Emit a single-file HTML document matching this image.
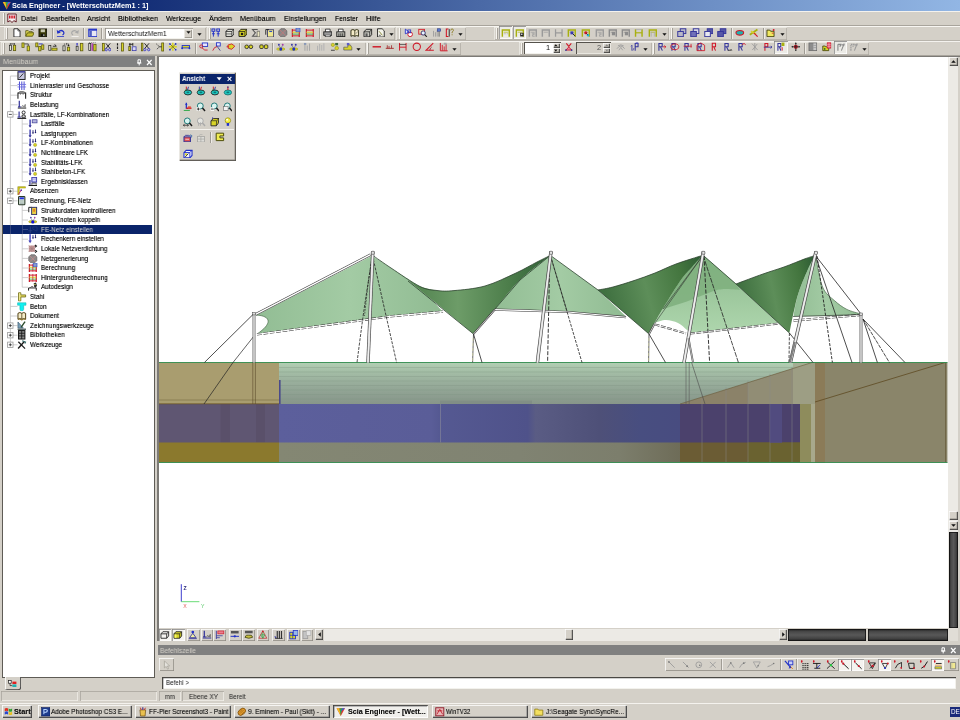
<!DOCTYPE html>
<html lang="de">
<head>
<meta charset="utf-8">
<title>Scia Engineer - [WetterschutzMem1 : 1]</title>
<style>
html,body{margin:0;padding:0;}
body{width:960px;height:720px;overflow:hidden;background:#d4d0c8;position:relative;font-family:"Liberation Sans",sans-serif;font-size:7px;color:#111;}
.abs{position:absolute;}
.t{position:absolute;white-space:nowrap;line-height:1;will-change:transform;}
#titlebar{left:0;top:0;width:960px;height:10.5px;background:linear-gradient(90deg,#0a246a 0%,#132d76 14%,#2a4788 30%,#4a69a6 50%,#6d8fc5 74%,#92b6e4 100%);}
#titlebar .t{color:#fff;font-weight:bold;font-size:7.3px;left:12.4px;top:1.6px;}
.menu .t{font-size:7.2px;top:14.8px;color:#000;text-shadow:0 0 0.5px rgba(0,0,0,0.5);}
.grip{position:absolute;width:1.1px;background:#f8f6f2;box-shadow:0.9px 0 0 #a09c94;}
.sep{position:absolute;width:0.8px;background:#a09c94;box-shadow:0.8px 0 0 #f4f2ee;}
.hdr{position:absolute;background:#808080;color:#d4d0c8;font-size:7.2px;}
.tree .t{font-size:6.9px;color:#000;text-shadow:0 0 0.5px rgba(0,0,0,0.5);}
.sunk{position:absolute;background:#fff;box-shadow:inset 1px 1px 0 #55524c,inset -0.8px -0.8px 0 #f0eee8;}
.btn{position:absolute;background:#d4d0c8;box-shadow:inset 0.7px 0.7px 0 #fff,inset -0.7px -0.7px 0 #404040,inset -1.4px -1.4px 0 #8c8880;}
.task .t{font-size:6.9px;color:#000;text-shadow:0 0 0.5px rgba(0,0,0,0.45);}
</style>
</head>
<body>

<div id="titlebar" class="abs"><svg class="abs" style="left:1.6px;top:0.8px" width="9.6" height="9" viewBox="0 0 10 10"><path d="M0.6 1.2H9.4L5 9.4Z" fill="#e83030"/><path d="M0.6 1.2L3.6 1.2L5 9.4Z" fill="#f0c020"/><path d="M3.6 1.2H6.4L5 9.4Z" fill="#30a848"/><path d="M6.4 1.2H9.4L5 5Z" fill="#4070e0"/></svg><span class="t">Scia Engineer - [WetterschutzMem1 : 1]</span></div>
<div class="menu"><span class="t" style="left:21.0px;top:14.9px;font-size:7.4px;transform:scaleX(0.955);transform-origin:0 0">Datei</span><span class="t" style="left:45.5px;top:14.9px;font-size:7.4px;transform:scaleX(0.936);transform-origin:0 0">Bearbeiten</span><span class="t" style="left:87.0px;top:14.9px;font-size:7.4px;transform:scaleX(0.948);transform-origin:0 0">Ansicht</span><span class="t" style="left:118.0px;top:14.9px;font-size:7.4px;transform:scaleX(0.992);transform-origin:0 0">Bibliotheken</span><span class="t" style="left:166.0px;top:14.9px;font-size:7.4px;transform:scaleX(0.938);transform-origin:0 0">Werkzeuge</span><span class="t" style="left:209.0px;top:14.9px;font-size:7.4px;transform:scaleX(0.964);transform-origin:0 0">Ändern</span><span class="t" style="left:240.0px;top:14.9px;font-size:7.4px;transform:scaleX(0.959);transform-origin:0 0">Menübaum</span><span class="t" style="left:284.0px;top:14.9px;font-size:7.4px;transform:scaleX(0.956);transform-origin:0 0">Einstellungen</span><span class="t" style="left:334.5px;top:14.9px;font-size:7.4px;transform:scaleX(0.917);transform-origin:0 0">Fenster</span><span class="t" style="left:365.5px;top:14.9px;font-size:7.4px;transform:scaleX(0.979);transform-origin:0 0">Hilfe</span></div>
<div class="abs" style="left:0;top:10.5px;width:960px;height:0.8px;background:#f4f2ee"></div>
<div class="abs" style="left:0;top:25px;width:960px;height:0.7px;background:#a8a49c"></div><div class="abs" style="left:0;top:25.7px;width:960px;height:0.7px;background:#f8f6f2"></div>
<div class="abs" style="left:0;top:40.3px;width:960px;height:0.7px;background:#b8b4ac"></div><div class="abs" style="left:0;top:41px;width:960px;height:0.7px;background:#f4f2ee"></div>
<div class="abs" style="left:0;top:55.2px;width:960px;height:0.8px;background:#a8a49c"></div>
<div class="grip" style="left:2.5px;top:12.5px;height:11px"></div>
<svg class="abs" style="left:6.5px;top:13px" width="10" height="10.5" viewBox="0 0 10 10.5"><path d="M0.8 1H9.2V9L6.8 7.6L5 9.6L3.2 7.6L0.8 9Z" fill="#f4f0f0" stroke="#5a1018" stroke-width="0.9"/><path d="M2.6 2.4V5.4M4.2 2.4V5.4M5.8 2.4V5.4M7.4 2.4V5.4" stroke="#d01020" stroke-width="1.1"/></svg>
<div class="abs" style="left:4px;top:26.6px;width:202px;height:13.4px;box-shadow:inset 0.7px 0.7px 0 #f0eee8,inset -0.7px -0.7px 0 #aeaaa2"></div>
<div class="grip" style="left:6px;top:28px;height:11px"></div>
<svg class="abs" style="left:11.5px;top:27.8px" width="9.6" height="9.6" viewBox="0 0 10 10"><path d="M2 0.8H6.2L8.4 3V9.4H2Z" fill="#fff" stroke="#1a1a1a" stroke-width="0.9"/><path d="M6.2 0.8V3H8.4" fill="none" stroke="#1a1a1a" stroke-width="0.7"/></svg>
<svg class="abs" style="left:24.8px;top:27.8px" width="9.6" height="9.6" viewBox="0 0 10 10"><path d="M0.8 8.6V2.8H3.4L4.2 3.8H7.6V5" fill="#e8e060" stroke="#4a4a08" stroke-width="0.8"/><path d="M0.8 8.6L2.6 5H9.6L7.8 8.6Z" fill="#c8c030" stroke="#4a4a08" stroke-width="0.8"/><path d="M6 1.8Q7.6 0.6 8.8 2.2" fill="none" stroke="#1a1a1a" stroke-width="0.7"/></svg>
<svg class="abs" style="left:37.8px;top:27.8px" width="9.6" height="9.6" viewBox="0 0 10 10"><rect x="1" y="1" width="8" height="8" fill="#3a3a08" stroke="#15150a" stroke-width="0.9"/><rect x="2.8" y="1.4" width="4.4" height="3" fill="#c8c8b0"/><rect x="3" y="6" width="4" height="3" fill="#15150a"/><rect x="5.6" y="6.6" width="1" height="1.8" fill="#ddd"/></svg>
<div class="sep" style="left:51.5px;top:28px;height:11px"></div>
<svg class="abs" style="left:56.2px;top:27.8px" width="9.6" height="9.6" viewBox="0 0 10 10"><path d="M2.4 4.2Q5 1.4 7.6 3.6Q9.2 5.6 6.8 7.4" fill="none" stroke="#2030c8" stroke-width="1.3"/><path d="M0.8 2L1.4 6L5 4.8Z" fill="#2030c8"/><path d="M1 9H8.4" stroke="#2030c8" stroke-width="0.9"/></svg>
<svg class="abs" style="left:69.8px;top:27.8px" width="9.6" height="9.6" viewBox="0 0 10 10"><path d="M7.6 4.2Q5 1.4 2.4 3.6Q0.8 5.6 3.2 7.4" fill="none" stroke="#a8a8a8" stroke-width="1.2"/><path d="M9.2 2L8.6 6L5 4.8Z" fill="#a8a8a8"/><path d="M1.6 9H9" stroke="#fff" stroke-width="0.8"/></svg>
<div class="sep" style="left:82.6px;top:28px;height:11px"></div>
<svg class="abs" style="left:87.7px;top:27.8px" width="9.6" height="9.6" viewBox="0 0 10 10"><rect x="0.8" y="1.2" width="8.6" height="7.8" fill="#e8e8f4" stroke="#2030c8" stroke-width="1"/><rect x="0.8" y="1.2" width="8.6" height="1.6" fill="#2030c8"/><rect x="1.4" y="3" width="2.6" height="5.6" fill="#5060c0"/></svg>
<div class="sep" style="left:101.2px;top:28px;height:11px"></div>
<div class="abs" style="left:104.5px;top:27.6px;width:88.5px;height:11.4px;background:#fff;box-shadow:inset 0.8px 0.8px 0 #8c8880,inset -0.8px -0.8px 0 #f0eee8"><span class="t" style="left:3.0px;top:2.2px;font-size:7.4px;color:#111;transform:scaleX(0.924);transform-origin:0 0">WetterschutzMem1</span></div>
<div class="abs" style="left:183.8px;top:28.5px;width:8.4px;height:9.7px;background:#d4d0c8;box-shadow:inset 0.7px 0.7px 0 #f4f2ee,inset -0.7px -0.7px 0 #8c8880"></div>
<svg class="abs" style="left:185.5px;top:31.2px" width="5" height="3" viewBox="0 0 5 3"><path d="M0.4 0.2H4.6L2.5 2.8Z" fill="#111"/></svg>
<svg class="abs" style="left:196.5px;top:33.4px" width="5" height="3" viewBox="0 0 5 3"><path d="M0.4 0.2H4.6L2.5 2.8Z" fill="#111"/></svg>
<div class="abs" style="left:206.5px;top:26.6px;width:188px;height:13.4px;box-shadow:inset 0.7px 0.7px 0 #f0eee8,inset -0.7px -0.7px 0 #aeaaa2"></div>
<div class="grip" style="left:208.5px;top:28px;height:11px"></div>
<svg class="abs" style="left:210.7px;top:27.8px" width="9.6" height="9.6" viewBox="0 0 10 10"><g fill="none" stroke="#2030c8" stroke-width="1"><rect x="1" y="1" width="3" height="2.4"/><rect x="6" y="1" width="3" height="2.4"/><path d="M2.5 3.4V9M7.5 3.4V9M1 6H4M6 6H9"/></g></svg>
<svg class="abs" style="left:224.7px;top:27.8px" width="9.6" height="9.6" viewBox="0 0 10 10"><path d="M1 3.6L3 1.4H9.2V6.4L7.2 8.8H1Z" fill="#e4e4dc" stroke="#1a1a1a" stroke-width="0.9"/><path d="M1 3.6H7.2V8.8M7.2 3.6L9.2 1.4" fill="none" stroke="#1a1a1a" stroke-width="0.8"/><path d="M1 6.2H7.2" stroke="#1a1a1a" stroke-width="0.6"/></svg>
<svg class="abs" style="left:237.7px;top:27.8px" width="9.6" height="9.6" viewBox="0 0 10 10"><path d="M1 3.6L3 1.4H9.2V6.4L7.2 8.8H1Z" fill="#d8d428" stroke="#1a1a1a" stroke-width="0.9"/><path d="M1 3.6H7.2V8.8M7.2 3.6L9.2 1.4" fill="none" stroke="#1a1a1a" stroke-width="0.8"/><rect x="3" y="5" width="2.4" height="2.4" fill="#1a1a1a"/></svg>
<svg class="abs" style="left:250.7px;top:27.8px" width="9.6" height="9.6" viewBox="0 0 10 10"><path d="M7 1.6H1.6L4.6 5L1.6 8.6H7" fill="none" stroke="#555" stroke-width="1.1"/><path d="M6.4 3.4H9.2V9.2H6.4Z" fill="#e8e4c0" stroke="#555" stroke-width="0.7"/></svg>
<svg class="abs" style="left:264.7px;top:27.8px" width="9.6" height="9.6" viewBox="0 0 10 10"><rect x="2.6" y="1.8" width="6.4" height="7.6" fill="#f0e890" stroke="#3a3a6a" stroke-width="0.9"/><path d="M0.8 7V1.6H4" fill="none" stroke="#1a1a1a" stroke-width="0.9"/><rect x="4.4" y="3" width="3" height="1.2" fill="#3050c0"/></svg>
<svg class="abs" style="left:278.0px;top:27.8px" width="9.6" height="9.6" viewBox="0 0 10 10"><path d="M3 0.8H7L9.2 3V7L7 9.2H3L0.8 7V3Z" fill="#8c8686" stroke="#5a5858" stroke-width="0.7"/><path d="M2 2L8 8M8 2L2 8" stroke="#c07a7a" stroke-width="0.9"/></svg>
<svg class="abs" style="left:291.2px;top:27.8px" width="9.6" height="9.6" viewBox="0 0 10 10"><path d="M1.4 1V9.4M8.6 1V9.4" stroke="#d01828" stroke-width="1.2"/><path d="M1.4 2.2H8.6" stroke="#d01828" stroke-width="1"/><path d="M1.4 4.4H8.6" stroke="#d8d428" stroke-width="1.1"/><path d="M1.4 6.4H8.6" stroke="#44aa44" stroke-width="0.9"/><path d="M1.4 8.2H8.6" stroke="#d01828" stroke-width="1"/><rect x="5.2" y="0" width="4.2" height="4" fill="#8899cc" stroke="#3355cc" stroke-width="0.7"/></svg>
<svg class="abs" style="left:305.2px;top:27.8px" width="9.6" height="9.6" viewBox="0 0 10 10"><path d="M1.4 1V9.4M8.6 1V9.4" stroke="#d01828" stroke-width="1.2"/><path d="M1.4 2.2H8.6" stroke="#d01828" stroke-width="1"/><path d="M1.4 4.4H8.6" stroke="#d8d428" stroke-width="1.1"/><path d="M1.4 6.4H8.6" stroke="#44aa44" stroke-width="0.9"/><path d="M1.4 8.2H8.6" stroke="#d01828" stroke-width="1"/></svg>
<div class="sep" style="left:318.6px;top:28px;height:11px"></div>
<svg class="abs" style="left:322.7px;top:27.8px" width="9.6" height="9.6" viewBox="0 0 10 10"><path d="M2.6 4V1.2H7.4V4" fill="#fff" stroke="#1a1a1a" stroke-width="0.8"/><rect x="0.8" y="4" width="8.4" height="3.6" fill="#9a9a9a" stroke="#1a1a1a" stroke-width="0.9"/><path d="M2.4 7.6V9.2H7.6V7.6" fill="#e8e8e8" stroke="#1a1a1a" stroke-width="0.8"/></svg>
<svg class="abs" style="left:336.2px;top:27.8px" width="9.6" height="9.6" viewBox="0 0 10 10"><path d="M2.6 4V1.2H7.4V4" fill="#fff" stroke="#1a1a1a" stroke-width="0.8"/><rect x="0.8" y="4" width="8.4" height="5" fill="#b8b8b0" stroke="#1a1a1a" stroke-width="0.9"/><path d="M3 5.6V9M5 5.6V9M7 5.6V9" stroke="#1a1a1a" stroke-width="0.8"/></svg>
<svg class="abs" style="left:349.7px;top:27.8px" width="9.6" height="9.6" viewBox="0 0 10 10"><path d="M1 2.4Q3 0.8 5 2.4Q7 0.8 9 2.4V8.6Q7 7.2 5 8.6Q3 7.2 1 8.6Z" fill="#f4ecc8" stroke="#2a2a10" stroke-width="1"/><path d="M5 2.4V8.6" stroke="#2a2a10" stroke-width="0.8"/><path d="M6 6L8.4 3.4" stroke="#777" stroke-width="0.8"/></svg>
<svg class="abs" style="left:363.2px;top:27.8px" width="9.6" height="9.6" viewBox="0 0 10 10"><path d="M1 4L3.4 1.4H9V7L7 9.2H1Z" fill="#c8c8c0" stroke="#1a1a1a" stroke-width="0.9"/><path d="M1 4H7V9.2M7 4L9 1.4" fill="none" stroke="#1a1a1a" stroke-width="0.8"/><rect x="2.6" y="5.6" width="2.2" height="3.4" fill="#555"/></svg>
<svg class="abs" style="left:376.2px;top:27.8px" width="9.6" height="9.6" viewBox="0 0 10 10"><path d="M1.6 0.8H6.4L8.6 3V9.4H1.6Z" fill="#f4f4ec" stroke="#1a1a1a" stroke-width="0.9"/><path d="M3.2 3.4L6.6 7.6" stroke="#8a8a40" stroke-width="1"/><path d="M3 7.6H5" stroke="#1a1a1a" stroke-width="0.7"/></svg>
<svg class="abs" style="left:388.7px;top:33.4px" width="5" height="3" viewBox="0 0 5 3"><path d="M0.4 0.2H4.6L2.5 2.8Z" fill="#111"/></svg>
<div class="abs" style="left:395.5px;top:26.6px;width:70px;height:13.4px;box-shadow:inset 0.7px 0.7px 0 #f0eee8,inset -0.7px -0.7px 0 #aeaaa2"></div>
<div class="grip" style="left:398.6px;top:28px;height:11px"></div>
<svg class="abs" style="left:404.2px;top:27.8px" width="9.6" height="9.6" viewBox="0 0 10 10"><path d="M1.4 1.2L5.6 4.4L1.4 6Z" fill="#e8e8ff" stroke="#2030c8" stroke-width="0.9"/><circle cx="6.4" cy="6.6" r="2.4" fill="#fff" stroke="#d01828" stroke-width="1"/><rect x="4" y="2" width="3" height="3" fill="none" stroke="#2030c8" stroke-width="0.8"/></svg>
<svg class="abs" style="left:418.2px;top:27.8px" width="9.6" height="9.6" viewBox="0 0 10 10"><rect x="0.8" y="1.4" width="6" height="5" fill="#f0d8b0" stroke="#d01828" stroke-width="0.9"/><circle cx="5.4" cy="5.2" r="2.2" fill="#e8f4ff" stroke="#2a2a6a" stroke-width="0.9"/><path d="M7 6.8L9.2 9.2" stroke="#1a1a1a" stroke-width="1.2"/></svg>
<svg class="abs" style="left:432.4px;top:27.8px" width="9.6" height="9.6" viewBox="0 0 10 10"><path d="M1.6 3V9M3.6 4.4V9M5.4 2.4V9" stroke="#9a9a9a" stroke-width="0.9"/><rect x="5.6" y="0.8" width="3.4" height="2.6" fill="#5878d0" stroke="#2a3a8a" stroke-width="0.6"/><path d="M7.4 3.6V9" stroke="#666" stroke-width="1"/></svg>
<svg class="abs" style="left:445.2px;top:27.8px" width="9.6" height="9.6" viewBox="0 0 10 10"><path d="M3.6 1H1.4V9H3.6" fill="none" stroke="#d01828" stroke-width="1.1"/><path d="M4.4 1.2V9" stroke="#1a1a1a" stroke-width="0.9"/><path d="M6 2.6Q6 1 7.4 1Q8.8 1 8.8 2.4Q8.8 3.4 7.4 4.2V5.4" fill="none" stroke="#8a7a20" stroke-width="0.9"/><circle cx="7.4" cy="7" r="0.6" fill="#8a7a20"/></svg>
<svg class="abs" style="left:457.7px;top:33.4px" width="5" height="3" viewBox="0 0 5 3"><path d="M0.4 0.2H4.6L2.5 2.8Z" fill="#111"/></svg>
<div class="abs" style="left:493.5px;top:26.6px;width:175.5px;height:13.4px;box-shadow:inset 0.7px 0.7px 0 #f0eee8,inset -0.7px -0.7px 0 #aeaaa2"></div>
<div class="grip" style="left:496px;top:28px;height:11px"></div>
<div class="abs" style="left:499.2px;top:26.2px;width:13.2px;height:12.8px;background:#ecebe6;box-shadow:inset 0.7px 0.7px 0 #808080,inset -0.7px -0.7px 0 #fff"></div><svg class="abs" style="left:501.0px;top:27.8px" width="9.6" height="9.6" viewBox="0 0 10 10"><path d="M1.4 9V2H8.6V9" fill="none" stroke="#a8b010" stroke-width="1.5"/><path d="M2.8 4.4H7.2" stroke="#a8b010" stroke-width="0.7"/><path d="M3 6H7" stroke="#888" stroke-width="0.7" stroke-dasharray="0.8 0.8"/></svg>
<div class="abs" style="left:513.1px;top:26.2px;width:13.2px;height:12.8px;background:#ecebe6;box-shadow:inset 0.7px 0.7px 0 #808080,inset -0.7px -0.7px 0 #fff"></div><svg class="abs" style="left:514.9px;top:27.8px" width="9.6" height="9.6" viewBox="0 0 10 10"><path d="M1.4 9V2H8.6V9" fill="none" stroke="#a8b010" stroke-width="1.5"/><path d="M2.8 4.4H7.2" stroke="#a8b010" stroke-width="0.7"/><rect x="5.4" y="5" width="3.6" height="3.8" fill="#222"/><rect x="6.2" y="5.8" width="1.6" height="1.4" fill="#ddd"/></svg>
<svg class="abs" style="left:527.8px;top:27.8px" width="9.6" height="9.6" viewBox="0 0 10 10"><path d="M1.4 9V2H8.6V9" fill="none" stroke="#9a9a9a" stroke-width="1.5"/><path d="M2.8 4.4H7.2" stroke="#9a9a9a" stroke-width="0.7"/><path d="M4 5.4H6.4V7H4.6V8.6H7" fill="none" stroke="#9a9a9a" stroke-width="0.8"/></svg>
<svg class="abs" style="left:540.6px;top:27.8px" width="9.6" height="9.6" viewBox="0 0 10 10"><path d="M1.4 9V2H8.6V9" fill="none" stroke="#9a9a9a" stroke-width="1.5"/><path d="M2.8 4.4H7.2" stroke="#9a9a9a" stroke-width="0.7"/></svg>
<svg class="abs" style="left:554.1px;top:27.8px" width="9.6" height="9.6" viewBox="0 0 10 10"><path d="M1.6 1.4V9M8.4 1.4V9M1.6 5H8.4" fill="none" stroke="#9a9a9a" stroke-width="1.3"/></svg>
<svg class="abs" style="left:567.4px;top:27.8px" width="9.6" height="9.6" viewBox="0 0 10 10"><path d="M1.4 9V2H8.6V9" fill="none" stroke="#a8b010" stroke-width="1.5"/><path d="M2.8 4.4H7.2" stroke="#a8b010" stroke-width="0.7"/><rect x="3.6" y="3.6" width="3" height="3" fill="#3838b8"/><path d="M6 6L8.6 8.6" stroke="#222" stroke-width="1"/></svg>
<svg class="abs" style="left:580.6px;top:27.8px" width="9.6" height="9.6" viewBox="0 0 10 10"><path d="M1.4 9V2H8.6V9" fill="none" stroke="#a8b010" stroke-width="1.5"/><path d="M2.8 4.4H7.2" stroke="#a8b010" stroke-width="0.7"/><circle cx="5" cy="5" r="1.6" fill="#d01828"/><circle cx="7.4" cy="7.6" r="1.3" fill="#20b8e0"/><path d="M5.6 5.6L7 7.2" stroke="#222" stroke-width="0.8"/></svg>
<svg class="abs" style="left:594.5px;top:27.8px" width="9.6" height="9.6" viewBox="0 0 10 10"><path d="M1.4 9V2H8.6V9" fill="none" stroke="#9a9a9a" stroke-width="1.5"/><path d="M2.8 4.4H7.2" stroke="#9a9a9a" stroke-width="0.7"/><path d="M4 5.4H6.4V7H4.6V8.6H7" fill="none" stroke="#9a9a9a" stroke-width="0.8"/></svg>
<svg class="abs" style="left:607.6px;top:27.8px" width="9.6" height="9.6" viewBox="0 0 10 10"><path d="M1.4 9V2H8.6V9" fill="none" stroke="#8c8c8c" stroke-width="1.5"/><path d="M2.8 4.4H7.2" stroke="#8c8c8c" stroke-width="0.7"/><rect x="4" y="4" width="3.4" height="3.6" fill="#8c8c8c"/></svg>
<svg class="abs" style="left:620.8px;top:27.8px" width="9.6" height="9.6" viewBox="0 0 10 10"><path d="M1.4 9V2H8.6V9" fill="none" stroke="#8c8c8c" stroke-width="1.5"/><path d="M2.8 4.4H7.2" stroke="#8c8c8c" stroke-width="0.7"/><rect x="4" y="4" width="3.4" height="3.6" fill="#8c8c8c"/></svg>
<svg class="abs" style="left:634.1px;top:27.8px" width="9.6" height="9.6" viewBox="0 0 10 10"><path d="M1.6 1.4V9M8.4 1.4V9" fill="none" stroke="#a8b010" stroke-width="1.5"/><path d="M1.6 5H8.4" stroke="#a8b010" stroke-width="1.2"/><path d="M1.6 1.6H8.4" stroke="#aaa" stroke-width="0.8"/></svg>
<svg class="abs" style="left:647.6px;top:27.8px" width="9.6" height="9.6" viewBox="0 0 10 10"><path d="M1.4 9V2H8.6V9" fill="none" stroke="#a8b010" stroke-width="1.5"/><path d="M2.8 4.4H7.2" stroke="#a8b010" stroke-width="0.7"/><path d="M3.4 4V9M6.6 4V9" stroke="#aaa" stroke-width="0.8"/></svg>
<svg class="abs" style="left:661.5px;top:33.4px" width="5" height="3" viewBox="0 0 5 3"><path d="M0.4 0.2H4.6L2.5 2.8Z" fill="#111"/></svg>
<div class="abs" style="left:669px;top:26.6px;width:118px;height:13.4px;box-shadow:inset 0.7px 0.7px 0 #f0eee8,inset -0.7px -0.7px 0 #aeaaa2"></div>
<div class="grip" style="left:671px;top:28px;height:11px"></div>
<svg class="abs" style="left:677.0px;top:27.8px" width="9.6" height="9.6" viewBox="0 0 10 10"><rect x="3.4" y="0.8" width="5.8" height="5" fill="#b8b8c8" stroke="#34349a" stroke-width="1"/><rect x="0.8" y="3.6" width="5.8" height="5.4" fill="#b8b8c8" stroke="#34349a" stroke-width="1"/></svg>
<svg class="abs" style="left:690.2px;top:27.8px" width="9.6" height="9.6" viewBox="0 0 10 10"><rect x="3.4" y="0.8" width="5.8" height="5" fill="#d8d8e8" stroke="#34349a" stroke-width="1"/><rect x="0.8" y="3.6" width="5.8" height="5.4" fill="#7070b8" stroke="#34349a" stroke-width="1"/></svg>
<svg class="abs" style="left:703.8px;top:27.8px" width="9.6" height="9.6" viewBox="0 0 10 10"><rect x="3.4" y="0.8" width="5.8" height="5" fill="#5858a8" stroke="#34349a" stroke-width="1"/><rect x="0.8" y="3.6" width="5.8" height="5.4" fill="#e8e8f0" stroke="#34349a" stroke-width="1"/></svg>
<svg class="abs" style="left:717.2px;top:27.8px" width="9.6" height="9.6" viewBox="0 0 10 10"><rect x="3.4" y="0.8" width="5.8" height="5" fill="#5858a8" stroke="#34349a" stroke-width="1"/><rect x="0.8" y="3.6" width="5.8" height="5.4" fill="#5858a8" stroke="#34349a" stroke-width="1"/></svg>
<div class="sep" style="left:730.6px;top:28px;height:11px"></div>
<svg class="abs" style="left:735.0px;top:27.8px" width="9.6" height="9.6" viewBox="0 0 10 10"><ellipse cx="5" cy="5" rx="4" ry="2.4" fill="#20b0b0" stroke="#d01828" stroke-width="1.1"/></svg>
<svg class="abs" style="left:749.2px;top:27.8px" width="9.6" height="9.6" viewBox="0 0 10 10"><path d="M0.8 7L8.8 1.6" stroke="#a8b010" stroke-width="1.8"/><path d="M2 3.4L7.4 6.4" stroke="#d8d428" stroke-width="1.6"/><path d="M5 5L9 9" stroke="#d01828" stroke-width="1.2"/></svg>
<div class="sep" style="left:762.6px;top:28px;height:11px"></div>
<svg class="abs" style="left:766.2px;top:27.8px" width="9.6" height="9.6" viewBox="0 0 10 10"><path d="M1 9V2.2H4L4.8 3.4H8.4V9Z" fill="#f0e860" stroke="#3a3a08" stroke-width="0.9"/><circle cx="8" cy="2" r="1" fill="#d01828"/><path d="M6 5.4H8" stroke="#d01828" stroke-width="0.8"/></svg>
<svg class="abs" style="left:780.2px;top:33.4px" width="5" height="3" viewBox="0 0 5 3"><path d="M0.4 0.2H4.6L2.5 2.8Z" fill="#111"/></svg>
<div class="abs" style="left:0.5px;top:41.6px;width:365px;height:13.4px;box-shadow:inset 0.7px 0.7px 0 #f0eee8,inset -0.7px -0.7px 0 #aeaaa2"></div>
<div class="grip" style="left:2.5px;top:43px;height:11px"></div>
<svg class="abs" style="left:7.7px;top:42.4px" width="9.6" height="9.6" viewBox="0 0 10 10"><rect x="1.4" y="3.4" width="2.2" height="5.6" fill="#e8e8d8" stroke="#1a1a1a" stroke-width="0.7"/><rect x="5.6" y="3.4" width="2.4" height="5.6" fill="#d8d428" stroke="#5e5a10" stroke-width="0.8"/><path d="M2.4 2H7" stroke="#1a1a1a" stroke-width="0.7"/><path d="M2.4 1.2V3M6.8 1.2V3" stroke="#1a1a1a" stroke-width="0.6"/></svg>
<svg class="abs" style="left:21.2px;top:42.4px" width="9.6" height="9.6" viewBox="0 0 10 10"><rect x="1" y="1" width="2.2" height="4.6" fill="#d8d428" stroke="#5e5a10" stroke-width="0.8"/><rect x="6.4" y="4.2" width="2.4" height="5" fill="#d8d428" stroke="#5e5a10" stroke-width="0.8"/><path d="M3.6 2H7.6V4" fill="none" stroke="#1a1a1a" stroke-width="0.7"/></svg>
<svg class="abs" style="left:35.2px;top:42.4px" width="9.6" height="9.6" viewBox="0 0 10 10"><rect x="0.8" y="1" width="2.2" height="4" fill="#d8d428" stroke="#5e5a10" stroke-width="0.8"/><rect x="3.8" y="4.6" width="2.4" height="4.6" fill="#d8d428" stroke="#5e5a10" stroke-width="0.8"/><rect x="7" y="3" width="2.2" height="4.6" fill="#d8d428" stroke="#5e5a10" stroke-width="0.8"/><path d="M4 2H8" stroke="#2030c8" stroke-width="0.9"/></svg>
<svg class="abs" style="left:48.4px;top:42.4px" width="9.6" height="9.6" viewBox="0 0 10 10"><rect x="0.8" y="3.6" width="2.2" height="5" fill="#e8e8d8" stroke="#1a1a1a" stroke-width="0.7"/><rect x="4" y="6.4" width="5.4" height="2.2" fill="#d8d428" stroke="#5e5a10" stroke-width="0.8"/><path d="M5 4.4H8.6L7 2.4" fill="none" stroke="#1a1a1a" stroke-width="0.9"/></svg>
<svg class="abs" style="left:62.2px;top:42.4px" width="9.6" height="9.6" viewBox="0 0 10 10"><rect x="1" y="4" width="2.2" height="5.2" fill="#e8e8d8" stroke="#1a1a1a" stroke-width="0.7"/><rect x="5.6" y="5.4" width="2.4" height="3.8" fill="#d8d428" stroke="#5e5a10" stroke-width="0.8"/><path d="M2 2.2H8M5 1V3.4" stroke="#1a1a1a" stroke-width="0.7" stroke-dasharray="1.2 0.8"/><circle cx="6.8" cy="3.6" r="0.9" fill="#1a1a1a"/></svg>
<svg class="abs" style="left:75.2px;top:42.4px" width="9.6" height="9.6" viewBox="0 0 10 10"><rect x="1.2" y="4.4" width="2" height="4.6" fill="#e8e8d8" stroke="#1a1a1a" stroke-width="0.7"/><rect x="5.8" y="1.4" width="2.4" height="7.8" fill="#d8d428" stroke="#5e5a10" stroke-width="0.8"/><circle cx="2.2" cy="2" r="0.9" fill="#3838c8"/><path d="M2.2 2.8V4.2" stroke="#3838c8" stroke-width="0.7"/></svg>
<svg class="abs" style="left:88.2px;top:42.4px" width="9.6" height="9.6" viewBox="0 0 10 10"><rect x="0.8" y="1.6" width="2" height="7.4" fill="#e8e8d8" stroke="#1a1a1a" stroke-width="0.7"/><rect x="3.6" y="1.4" width="1.8" height="7.8" fill="#b040b0"/><rect x="6" y="2.6" width="2.4" height="6.6" fill="#d8d428" stroke="#5e5a10" stroke-width="0.8"/><path d="M1 0.8H9" stroke="#1a1a1a" stroke-width="0.6" stroke-dasharray="1 1"/></svg>
<svg class="abs" style="left:101.8px;top:42.4px" width="9.6" height="9.6" viewBox="0 0 10 10"><rect x="0.6" y="1.4" width="1.8" height="7.8" fill="#d8d428" stroke="#5e5a10" stroke-width="0.8"/><path d="M4 1.4L8.6 7M8.6 1.4L4 7" stroke="#1a1a1a" stroke-width="0.9"/><circle cx="4.4" cy="8" r="1.2" fill="none" stroke="#3838c8" stroke-width="0.9"/><circle cx="8" cy="8" r="1.2" fill="none" stroke="#3838c8" stroke-width="0.9"/></svg>
<svg class="abs" style="left:114.8px;top:42.4px" width="9.6" height="9.6" viewBox="0 0 10 10"><rect x="6.8" y="1" width="2" height="8.4" fill="#d8d428" stroke="#5e5a10" stroke-width="0.8"/><path d="M2.6 1.2V9" stroke="#1a1a1a" stroke-width="1.2" stroke-dasharray="2.4 1.2"/></svg>
<svg class="abs" style="left:128.2px;top:42.4px" width="9.6" height="9.6" viewBox="0 0 10 10"><path d="M2 1V9M1 2.4H5M5 1V4" stroke="#1a1a1a" stroke-width="0.9"/><rect x="4.4" y="5" width="4" height="4" fill="#d8d8f8" stroke="#3838a8" stroke-width="0.8"/><rect x="0.8" y="4.6" width="1.6" height="4.4" fill="#d8d428" stroke="#5e5a10" stroke-width="0.8"/></svg>
<svg class="abs" style="left:141.2px;top:42.4px" width="9.6" height="9.6" viewBox="0 0 10 10"><rect x="0.4" y="1.2" width="1.6" height="8" fill="#d8d428" stroke="#5e5a10" stroke-width="0.8"/><path d="M3.6 1.4L8.4 7M8.4 1.4L3.6 7" stroke="#1a1a1a" stroke-width="0.9"/><circle cx="4" cy="8" r="1.2" fill="none" stroke="#3838c8" stroke-width="0.9"/><circle cx="8" cy="8" r="1.2" fill="none" stroke="#3838c8" stroke-width="0.9"/></svg>
<svg class="abs" style="left:154.7px;top:42.4px" width="9.6" height="9.6" viewBox="0 0 10 10"><rect x="7" y="1" width="2" height="8.4" fill="#d8d428" stroke="#5e5a10" stroke-width="0.8"/><path d="M1.4 2L4.6 5L1.4 8" fill="none" stroke="#1a1a1a" stroke-width="0.8" stroke-dasharray="1.4 0.8"/><path d="M4.4 5H7" stroke="#1a1a1a" stroke-width="0.8"/></svg>
<svg class="abs" style="left:167.8px;top:42.4px" width="9.6" height="9.6" viewBox="0 0 10 10"><path d="M5 0.8V9.2M0.8 5H9.2" stroke="#d8d428" stroke-width="1.6"/><path d="M2 2L8 8M8 2L2 8" stroke="#8a8610" stroke-width="1"/><g fill="#2030c8"><circle cx="2" cy="2" r="0.9"/><circle cx="8" cy="2" r="0.9"/><circle cx="2" cy="8" r="0.9"/><circle cx="8" cy="8" r="0.9"/></g></svg>
<svg class="abs" style="left:181.2px;top:42.4px" width="9.6" height="9.6" viewBox="0 0 10 10"><rect x="1.2" y="3.6" width="7.6" height="2.6" fill="#d8d428" stroke="#2030c8" stroke-width="0.9"/><circle cx="1.2" cy="6.6" r="1" fill="#2030c8"/><circle cx="8.8" cy="6.6" r="1" fill="#2030c8"/></svg>
<div class="sep" style="left:194.6px;top:43px;height:11px"></div>
<svg class="abs" style="left:199.2px;top:42.4px" width="9.6" height="9.6" viewBox="0 0 10 10"><rect x="3.4" y="1" width="5.6" height="3.6" fill="#e8e8ff" stroke="#2030c8" stroke-width="0.9"/><circle cx="2.4" cy="4.6" r="1.6" fill="none" stroke="#d01828" stroke-width="0.9"/><path d="M3 6L6 8.4H9" fill="none" stroke="#d01828" stroke-width="0.9"/></svg>
<svg class="abs" style="left:212.2px;top:42.4px" width="9.6" height="9.6" viewBox="0 0 10 10"><rect x="4.6" y="0.8" width="4" height="3.4" fill="#e8e8ff" stroke="#2030c8" stroke-width="0.9"/><path d="M0.8 9Q2 5 5.6 4.6" fill="none" stroke="#d01828" stroke-width="0.9"/><path d="M5.4 4.6L8.6 9" stroke="#3a3a8a" stroke-width="0.9"/></svg>
<svg class="abs" style="left:225.7px;top:42.4px" width="9.6" height="9.6" viewBox="0 0 10 10"><path d="M2 3.2L6 2L9.2 4.4L6 7.6L2.4 6.6Z" fill="#d8d428" stroke="#d01828" stroke-width="0.9"/><path d="M0.6 5H3" stroke="#d01828" stroke-width="1"/></svg>
<div class="sep" style="left:239.4px;top:43px;height:11px"></div>
<svg class="abs" style="left:244.2px;top:42.4px" width="9.6" height="9.6" viewBox="0 0 10 10"><circle cx="2.8" cy="5" r="1.9" fill="#d8d428" stroke="#1a1a1a" stroke-width="0.8"/><circle cx="7.2" cy="5" r="1.9" fill="#d8d428" stroke="#1a1a1a" stroke-width="0.8"/></svg>
<svg class="abs" style="left:259.2px;top:42.4px" width="9.6" height="9.6" viewBox="0 0 10 10"><rect x="0.8" y="3" width="3.6" height="3.8" rx="1" fill="#d8d428" stroke="#1a1a1a" stroke-width="0.8"/><rect x="5.6" y="3" width="3.6" height="3.8" rx="1" fill="#d8d428" stroke="#1a1a1a" stroke-width="0.8"/></svg>
<div class="sep" style="left:271.6px;top:43px;height:11px"></div>
<svg class="abs" style="left:276.2px;top:42.4px" width="9.6" height="9.6" viewBox="0 0 10 10"><ellipse cx="5" cy="7.4" rx="4.4" ry="1.4" fill="#d8d428" stroke="#8a8610" stroke-width="0.4"/><circle cx="5" cy="7.4" r="1.6" fill="#2030c8"/><circle cx="3" cy="2.8" r="1" fill="#3838a8"/><circle cx="7" cy="2.8" r="1" fill="#a838a8"/><path d="M3 3.6L4.6 6M7 3.6L5.4 6" stroke="#558" stroke-width="0.6"/></svg>
<svg class="abs" style="left:289.4px;top:42.4px" width="9.6" height="9.6" viewBox="0 0 10 10"><ellipse cx="5" cy="7.4" rx="4.4" ry="1.4" fill="#d8d428" stroke="#8a8610" stroke-width="0.4"/><circle cx="5" cy="7.4" r="1.6" fill="#2030c8"/><circle cx="3" cy="2.8" r="1" fill="#3838a8"/><circle cx="7" cy="2.8" r="1" fill="#3838a8"/><path d="M3 3.6L4.6 6M7 3.6L5.4 6" stroke="#558" stroke-width="0.6"/></svg>
<svg class="abs" style="left:302.7px;top:42.4px" width="9.6" height="9.6" viewBox="0 0 10 10"><path d="M2 2V9M4.4 3.6V9M6.8 1.6V9" stroke="#a8a8a8" stroke-width="1.1"/><rect x="1" y="1" width="2.4" height="2" fill="#8898b8"/></svg>
<svg class="abs" style="left:316.2px;top:42.4px" width="9.6" height="9.6" viewBox="0 0 10 10"><path d="M1.6 4V9M3.8 2V9M6 3V9M8.2 1.4V9" stroke="#b4b4b4" stroke-width="1.1"/></svg>
<svg class="abs" style="left:330.2px;top:42.4px" width="9.6" height="9.6" viewBox="0 0 10 10"><circle cx="3" cy="3" r="1.7" fill="#d8d428" stroke="#8a8610" stroke-width="0.5"/><circle cx="7" cy="6.4" r="1.9" fill="#d8d428" stroke="#8a8610" stroke-width="0.5"/><rect x="5.4" y="1" width="3" height="2.4" fill="#3a6a3a"/><path d="M1 8.6H5" stroke="#1a1a1a" stroke-width="0.8"/></svg>
<svg class="abs" style="left:343.2px;top:42.4px" width="9.6" height="9.6" viewBox="0 0 10 10"><path d="M0.8 8.4V5.4H5V3H7.6L9.2 5.6V8.4Z" fill="#d8d428" stroke="#555" stroke-width="0.7"/><rect x="4" y="1" width="2.6" height="2.4" fill="#5a5ac8"/></svg>
<svg class="abs" style="left:355.9px;top:48.0px" width="5" height="3" viewBox="0 0 5 3"><path d="M0.4 0.2H4.6L2.5 2.8Z" fill="#111"/></svg>
<div class="abs" style="left:365.5px;top:41.6px;width:95px;height:13.4px;box-shadow:inset 0.7px 0.7px 0 #f0eee8,inset -0.7px -0.7px 0 #aeaaa2"></div>
<div class="grip" style="left:367.4px;top:43px;height:11px"></div>
<svg class="abs" style="left:372.2px;top:42.4px" width="9.6" height="9.6" viewBox="0 0 10 10"><path d="M0.6 5H9.4" stroke="#d01828" stroke-width="1.5"/></svg>
<svg class="abs" style="left:385.2px;top:42.4px" width="9.6" height="9.6" viewBox="0 0 10 10"><path d="M0.8 6.6H9.2" stroke="#a02020" stroke-width="0.9"/><path d="M2.4 3.4V6.6M4.2 4.2V6.6M6.8 3.4V6.6" stroke="#a02020" stroke-width="0.8"/></svg>
<svg class="abs" style="left:398.2px;top:42.4px" width="9.6" height="9.6" viewBox="0 0 10 10"><path d="M1.6 1V9M8.4 1V9M1.6 5.4H8.4" fill="none" stroke="#d01828" stroke-width="1"/><path d="M1.6 2.6H8.4" stroke="#1a1a1a" stroke-width="0.6"/></svg>
<svg class="abs" style="left:411.8px;top:42.4px" width="9.6" height="9.6" viewBox="0 0 10 10"><circle cx="5" cy="5" r="3.8" fill="none" stroke="#d01828" stroke-width="1.1"/></svg>
<svg class="abs" style="left:425.2px;top:42.4px" width="9.6" height="9.6" viewBox="0 0 10 10"><path d="M8.6 1.2L1 8.6H9.2" fill="none" stroke="#d01828" stroke-width="1.1"/><path d="M5 8.6Q5.4 6 7 5.2" fill="none" stroke="#8a1020" stroke-width="0.8"/></svg>
<svg class="abs" style="left:438.8px;top:42.4px" width="9.6" height="9.6" viewBox="0 0 10 10"><path d="M1.4 1V9.2H9" fill="none" stroke="#d01828" stroke-width="1"/><path d="M3.4 3V9M5.4 4.6V9M7.4 2V9" stroke="#d01828" stroke-width="0.9"/><rect x="5" y="0.8" width="3" height="2" fill="#aaa"/></svg>
<svg class="abs" style="left:451.5px;top:48.0px" width="5" height="3" viewBox="0 0 5 3"><path d="M0.4 0.2H4.6L2.5 2.8Z" fill="#111"/></svg>
<div class="abs" style="left:518.5px;top:41.6px;width:133px;height:13.4px;box-shadow:inset 0.7px 0.7px 0 #f0eee8,inset -0.7px -0.7px 0 #aeaaa2"></div>
<div class="grip" style="left:520.6px;top:43px;height:11px"></div>
<div class="sunk" style="left:524px;top:41.8px;width:36.6px;height:11.8px;"><span class="t" style="left:22px;top:2.2px;font-size:7.4px;color:#111">1</span></div>
<div class="btn" style="left:552.6px;top:42.8px;width:7px;height:4.9px"></div><div class="btn" style="left:552.6px;top:47.699999999999996px;width:7px;height:4.9px"></div><svg class="abs" style="left:554.2px;top:44.0px" width="3.6" height="7.6" viewBox="0 0 3.6 7.6"><path d="M0 2.2L1.8 0.2L3.6 2.2ZM0 5.4L1.8 7.4L3.6 5.4Z" fill="#111"/></svg>
<svg class="abs" style="left:564.2px;top:42.4px" width="9.6" height="9.6" viewBox="0 0 10 10"><path d="M2.4 1.4L5 4.6L7.6 1.4" fill="none" stroke="#d01828" stroke-width="1.1"/><path d="M2 8.4L5 5.2L8 8.4Z" fill="#e888a0" stroke="#d01828" stroke-width="0.9"/><circle cx="2" cy="8.4" r="0.9" fill="#34349a"/><circle cx="8" cy="8.4" r="0.9" fill="#34349a"/></svg>
<div class="sunk" style="left:576px;top:41.8px;width:35.4px;height:11.8px;background:#d4d0c8"><span class="t" style="left:21px;top:2.2px;font-size:7.4px;color:#555">2</span></div>
<div class="btn" style="left:603.4px;top:42.8px;width:7px;height:4.9px"></div><div class="btn" style="left:603.4px;top:47.699999999999996px;width:7px;height:4.9px"></div><svg class="abs" style="left:605.0px;top:44.0px" width="3.6" height="7.6" viewBox="0 0 3.6 7.6"><path d="M0 2.2L1.8 0.2L3.6 2.2ZM0 5.4L1.8 7.4L3.6 5.4Z" fill="#888"/></svg>
<svg class="abs" style="left:615.9px;top:42.4px" width="9.6" height="9.6" viewBox="0 0 10 10"><path d="M1 7Q5 1.4 9 7M2 4Q5 2 8 4" fill="none" stroke="#9a9a9a" stroke-width="0.9"/><path d="M3 8.6L5 5.6L7 8.6" fill="none" stroke="#9a9a9a" stroke-width="0.8"/></svg>
<svg class="abs" style="left:630.2px;top:42.4px" width="9.6" height="9.6" viewBox="0 0 10 10"><path d="M1 4.4L2 3.4V9" fill="none" stroke="#34349a" stroke-width="0.9"/><path d="M3 9L4 6.4" stroke="#34349a" stroke-width="0.7"/><path d="M5.4 9V1.6H8.4V5H5.4" fill="none" stroke="#34349a" stroke-width="1.1"/><rect x="6" y="0.4" width="2.6" height="1.2" fill="#5a5ac8"/></svg>
<svg class="abs" style="left:642.5px;top:48.0px" width="5" height="3" viewBox="0 0 5 3"><path d="M0.4 0.2H4.6L2.5 2.8Z" fill="#111"/></svg>
<div class="abs" style="left:651.5px;top:41.6px;width:217.5px;height:13.4px;box-shadow:inset 0.7px 0.7px 0 #f0eee8,inset -0.7px -0.7px 0 #aeaaa2"></div>
<div class="grip" style="left:653.4px;top:43px;height:11px"></div>
<svg class="abs" style="left:657.2px;top:42.4px" width="9.6" height="9.6" viewBox="0 0 10 10"><path d="M2 9V1.6H5.4V5H2M5.6 9L3.6 5" fill="none" stroke="#34349a" stroke-width="1.1"/><path d="M6 5H9.2M7.8 3.6L9.2 5L7.8 6.4" fill="none" stroke="#d01828" stroke-width="0.9"/></svg>
<svg class="abs" style="left:670.2px;top:42.4px" width="9.6" height="9.6" viewBox="0 0 10 10"><path d="M2 9V1.6H5.4V5H2M5.6 9L3.6 5" fill="none" stroke="#34349a" stroke-width="1.1"/><ellipse cx="5" cy="5" rx="4.2" ry="3" fill="none" stroke="#d01828" stroke-width="0.9"/></svg>
<svg class="abs" style="left:683.2px;top:42.4px" width="9.6" height="9.6" viewBox="0 0 10 10"><path d="M2 9V1.6H5.4V5H2M5.6 9L3.6 5" fill="none" stroke="#34349a" stroke-width="1.1"/><path d="M0.6 4.4H9.2M8.4 2V6" fill="none" stroke="#d01828" stroke-width="0.8"/></svg>
<svg class="abs" style="left:696.0px;top:42.4px" width="9.6" height="9.6" viewBox="0 0 10 10"><path d="M2 9V1.6H5.4V5H2M5.6 9L3.6 5" fill="none" stroke="#34349a" stroke-width="1.1"/><path d="M1 9V3.4L5 1L9 3.4V9Z" fill="none" stroke="#d01828" stroke-width="0.9"/></svg>
<svg class="abs" style="left:708.6px;top:42.4px" width="9.6" height="9.6" viewBox="0 0 10 10"><path d="M3.4 9V1.4H6.8V5H3.4M6.8 9L5 5" fill="none" stroke="#d01828" stroke-width="1.1"/></svg>
<svg class="abs" style="left:723.2px;top:42.4px" width="9.6" height="9.6" viewBox="0 0 10 10"><path d="M2 9V1.6H5.4V5H2M5.6 9L3.6 5" fill="none" stroke="#34349a" stroke-width="1.1"/><path d="M5 8.6H9M8 7.4L9.2 8.6" stroke="#222" stroke-width="0.8"/></svg>
<svg class="abs" style="left:736.6px;top:42.4px" width="9.6" height="9.6" viewBox="0 0 10 10"><path d="M2 9V1.6H5.4V5H2M5.6 9L3.6 5" fill="none" stroke="#34349a" stroke-width="1.1"/><path d="M5.4 2.6Q7.6 0.4 9 2.8" fill="none" stroke="#d01828" stroke-width="1"/></svg>
<svg class="abs" style="left:749.9px;top:42.4px" width="9.6" height="9.6" viewBox="0 0 10 10"><path d="M2 1.6L8 8.4M7.6 2L2.4 8.4M5 1V9" stroke="#9a9a9a" stroke-width="0.9"/></svg>
<svg class="abs" style="left:762.5px;top:42.4px" width="9.6" height="9.6" viewBox="0 0 10 10"><path d="M2 9V1.6H5V5H2" fill="none" stroke="#d01828" stroke-width="1.1"/><path d="M0.8 5.4H9.4M8 4L9.4 5.4L8 6.8" fill="none" stroke="#34349a" stroke-width="0.9"/></svg>
<div class="abs" style="left:774.4px;top:40.8px;width:13.2px;height:12.8px;background:#ecebe6;box-shadow:inset 0.7px 0.7px 0 #808080,inset -0.7px -0.7px 0 #fff"></div><svg class="abs" style="left:776.2px;top:42.4px" width="9.6" height="9.6" viewBox="0 0 10 10"><path d="M2 9V1.6H5V5H2M5 9L3.6 5" fill="none" stroke="#34349a" stroke-width="1.1"/><rect x="5.8" y="0.6" width="3" height="3.6" fill="#a8b010"/><path d="M6.4 5.4V9" stroke="#d01828" stroke-width="1"/></svg>
<svg class="abs" style="left:790.5px;top:42.4px" width="9.6" height="9.6" viewBox="0 0 10 10"><circle cx="5" cy="5" r="2.2" fill="#d01828"/><path d="M5 0.6V9.4M0.6 5H9.4" stroke="#222" stroke-width="0.8"/><path d="M5 0.6L6 2H4ZM5 9.4L6 8H4ZM0.6 5L2 4V6ZM9.4 5L8 4V6Z" fill="#222"/></svg>
<div class="sep" style="left:804px;top:43px;height:11px"></div>
<svg class="abs" style="left:808.4px;top:42.4px" width="9.6" height="9.6" viewBox="0 0 10 10"><rect x="1" y="1" width="8" height="8" fill="#8c8c8c" stroke="#6a6a6a" stroke-width="0.8"/><rect x="5.6" y="1.4" width="3" height="7" fill="#c8c8c8"/><path d="M5.6 3.6H8.6M5.6 5.8H8.6" stroke="#8c8c8c" stroke-width="0.6"/></svg>
<svg class="abs" style="left:822.2px;top:42.4px" width="9.6" height="9.6" viewBox="0 0 10 10"><path d="M0.8 9V4.2H3.4L4 5H7V9Z" fill="#d8d428" stroke="#3a3a08" stroke-width="0.8"/><rect x="5.4" y="0.8" width="3.8" height="5.6" fill="#e04060" stroke="#d01828" stroke-width="0.6"/><path d="M5.4 2.8H9.2M5.4 4.6H9.2M7.3 0.8V6.4" stroke="#fcc" stroke-width="0.5"/><path d="M2 6L4.4 7.2L2 8.4Z" fill="#2a6a2a"/></svg>
<div class="abs" style="left:833.9px;top:40.8px;width:13.2px;height:12.8px;background:#ecebe6;box-shadow:inset 0.7px 0.7px 0 #808080,inset -0.7px -0.7px 0 #fff"></div><svg class="abs" style="left:835.7px;top:42.4px" width="9.6" height="9.6" viewBox="0 0 10 10"><path d="M2 9V2.4M2 2.4H5L4 5" fill="none" stroke="#8a8a8a" stroke-width="1.2"/><path d="M5.6 9L8.6 1.6M5.6 3H9" fill="none" stroke="#8a8a8a" stroke-width="1.1"/></svg>
<svg class="abs" style="left:849.0px;top:42.4px" width="9.6" height="9.6" viewBox="0 0 10 10"><path d="M2 9V2.4M2 2.4H5L4 5" fill="none" stroke="#9a9a9a" stroke-width="1.2" stroke-dasharray="1.6 0.6"/><path d="M5.6 9L8.6 1.6M5.6 3H9" fill="none" stroke="#9a9a9a" stroke-width="1.1"/></svg>
<svg class="abs" style="left:861.5px;top:48.0px" width="5" height="3" viewBox="0 0 5 3"><path d="M0.4 0.2H4.6L2.5 2.8Z" fill="#111"/></svg>
<div class="hdr" style="left:0;top:56.3px;width:155px;height:10.6px;"><span class="t" style="left:2.6px;top:1.9px;font-size:7.4px;transform:scaleX(0.956);transform-origin:0 0">Menübaum</span></div>
<svg class="abs" style="left:136px;top:58.6px" width="17" height="7" viewBox="0 0 17 7"><path d="M2 0.8H4.4V4H2ZM1 4H5.4M3.2 4V6.4" fill="none" stroke="#fff" stroke-width="1"/><path d="M11 0.8L15.6 6M15.6 0.8L11 6" stroke="#fff" stroke-width="1.2"/></svg>
<div class="abs" id="treebox" style="left:2.2px;top:69.6px;width:152.4px;height:608.6px;background:#fff;box-shadow:inset 1px 1px 0 #5e5b55,inset -1px -1px 0 #5e5b55"></div>
<div class="tree">
<svg class="abs" style="left:0;top:0" width="160" height="360" viewBox="0 0 160 360"><g fill="none" stroke="#c2c2c2" stroke-width="0.8"><path d="M10.4 76.0V344.8" /><path d="M10.4 76.0H17.5"/><path d="M10.4 85.6H17.5"/><path d="M10.4 95.2H17.5"/><path d="M10.4 104.8H17.5"/><path d="M10.4 114.4H17.5"/><path d="M22.2 124.0H28"/><path d="M22.2 133.6H28"/><path d="M22.2 143.2H28"/><path d="M22.2 152.8H28"/><path d="M22.2 162.4H28"/><path d="M22.2 172.0H28"/><path d="M22.2 181.6H28"/><path d="M10.4 191.2H17.5"/><path d="M10.4 200.8H17.5"/><path d="M22.2 210.4H28"/><path d="M22.2 220.0H28"/><path d="M22.2 229.6H28"/><path d="M22.2 239.2H28"/><path d="M22.2 248.8H28"/><path d="M22.2 258.4H28"/><path d="M22.2 268.0H28"/><path d="M22.2 277.6H28"/><path d="M22.2 287.2H28"/><path d="M10.4 296.8H17.5"/><path d="M10.4 306.4H17.5"/><path d="M10.4 316.0H17.5"/><path d="M10.4 325.6H17.5"/><path d="M10.4 335.2H17.5"/><path d="M10.4 344.8H17.5"/><path d="M22.2 118.4V181.6"/><path d="M22.2 204.8V287.2"/></g>
<rect x="7.6" y="111.7" width="5.4" height="5.4" fill="#fff" stroke="#9a9a9a" stroke-width="0.8"/>
<path d="M8.8 114.4H11.8" stroke="#222" stroke-width="0.8"/>
<rect x="7.6" y="188.5" width="5.4" height="5.4" fill="#fff" stroke="#9a9a9a" stroke-width="0.8"/>
<path d="M8.8 191.2H11.8" stroke="#222" stroke-width="0.8"/>
<path d="M10.3 189.7V192.7" stroke="#222" stroke-width="0.8"/>
<rect x="7.6" y="198.1" width="5.4" height="5.4" fill="#fff" stroke="#9a9a9a" stroke-width="0.8"/>
<path d="M8.8 200.8H11.8" stroke="#222" stroke-width="0.8"/>
<rect x="7.6" y="322.9" width="5.4" height="5.4" fill="#fff" stroke="#9a9a9a" stroke-width="0.8"/>
<path d="M8.8 325.6H11.8" stroke="#222" stroke-width="0.8"/>
<path d="M10.3 324.1V327.1" stroke="#222" stroke-width="0.8"/>
<rect x="7.6" y="332.5" width="5.4" height="5.4" fill="#fff" stroke="#9a9a9a" stroke-width="0.8"/>
<path d="M8.8 335.2H11.8" stroke="#222" stroke-width="0.8"/>
<path d="M10.3 333.7V336.7" stroke="#222" stroke-width="0.8"/>
<rect x="7.6" y="342.1" width="5.4" height="5.4" fill="#fff" stroke="#9a9a9a" stroke-width="0.8"/>
<path d="M8.8 344.8H11.8" stroke="#222" stroke-width="0.8"/>
<path d="M10.3 343.3V346.3" stroke="#222" stroke-width="0.8"/>
</svg>
<div class="abs" style="left:3.2px;top:225.0px;width:148.8px;height:9.2px;background:#0a246a"></div>
<div class="abs" style="left:22.2px;top:229.3px;width:6px;height:0.7px;background:#3a4c86"></div><div class="abs" style="left:10.1px;top:225.0px;width:0.7px;height:9.2px;background:#34467f"></div><div class="abs" style="left:21.9px;top:225.0px;width:0.7px;height:9.2px;background:#34467f"></div>
<svg class="abs" style="left:17.2px;top:71.2px" width="9.6" height="9.6" viewBox="0 0 10 10"><rect x="1" y="0.8" width="7.4" height="8" fill="#c8c8e0" stroke="#1a1a1a" stroke-width="1"/><path d="M2.6 7 L6.6 2.6" stroke="#333" stroke-width="1"/><rect x="1" y="0.3" width="7.4" height="1.2" fill="#4444bb"/></svg>
<span class="t" style="left:29.6px;top:72.2px;font-size:7.2px;transform:scaleX(0.884);transform-origin:0 0">Projekt</span>
<svg class="abs" style="left:17.2px;top:80.8px" width="9.6" height="9.6" viewBox="0 0 10 10"><path d="M2.6 0.5V9.5M5 0.5V9.5M7.4 0.5V9.5" stroke="#3333cc" stroke-width="0.9"/><path d="M0.5 3.6H9.5M0.5 6.2H9.5" stroke="#6666dd" stroke-width="0.8"/></svg>
<span class="t" style="left:29.6px;top:81.8px;font-size:7.2px;transform:scaleX(0.884);transform-origin:0 0">Linienraster und Geschosse</span>
<svg class="abs" style="left:17.2px;top:90.4px" width="9.6" height="9.6" viewBox="0 0 10 10"><path d="M1 9V3.2H9V9" fill="none" stroke="#1a1a1a" stroke-width="1.1"/><path d="M1 3.2L3 1.6H7L9 3.2" fill="none" stroke="#555" stroke-width="0.8"/><path d="M3.6 3.2V5M6.4 3.2V5" stroke="#555" stroke-width="0.7"/></svg>
<span class="t" style="left:29.6px;top:91.4px;font-size:7.2px;transform:scaleX(0.884);transform-origin:0 0">Struktur</span>
<svg class="abs" style="left:17.2px;top:100.0px" width="9.6" height="9.6" viewBox="0 0 10 10"><path d="M2.4 0.8V7.2" stroke="#3a3a9a" stroke-width="1.3"/><path d="M0.8 8.4H9.6" stroke="#1a1a1a" stroke-width="1"/><path d="M1 7.2H4" stroke="#3a3a9a" stroke-width="1.2"/><path d="M4.6 7.6L6 5.6L7.4 7.4L8.6 4.6V7.8" fill="none" stroke="#666" stroke-width="0.8"/></svg>
<span class="t" style="left:29.6px;top:101.0px;font-size:7.2px;transform:scaleX(0.884);transform-origin:0 0">Belastung</span>
<svg class="abs" style="left:17.2px;top:109.6px" width="9.6" height="9.6" viewBox="0 0 10 10"><path d="M2.2 1.5V7.4" stroke="#3a3a9a" stroke-width="1.3"/><path d="M0.6 7.4H4" stroke="#3a3a9a" stroke-width="1.2"/><path d="M0.4 8.8H9.6" stroke="#1a1a1a" stroke-width="1"/><circle cx="6.9" cy="2.6" r="1.6" fill="none" stroke="#1a1a1a" stroke-width="0.9"/><path d="M5 7.6L5.6 5.2H8.2L8.8 7.6Z" fill="none" stroke="#1a1a1a" stroke-width="0.9"/></svg>
<span class="t" style="left:29.6px;top:110.6px;font-size:7.2px;transform:scaleX(0.884);transform-origin:0 0">Lastfälle, LF-Kombinationen</span>
<svg class="abs" style="left:28.4px;top:119.2px" width="9.6" height="9.6" viewBox="0 0 10 10"><path d="M2.2 0.6V8" stroke="#5a5ab8" stroke-width="1.7"/><path d="M0.6 6.6L2.2 9.2L3.8 6.6Z" fill="#3a3a9a"/><rect x="4.4" y="0.8" width="5" height="3.2" fill="#b8b8e0" stroke="#44449a" stroke-width="0.8"/></svg>
<span class="t" style="left:40.8px;top:120.2px;font-size:7.2px;transform:scaleX(0.884);transform-origin:0 0">Lastfälle</span>
<svg class="abs" style="left:28.4px;top:128.8px" width="9.6" height="9.6" viewBox="0 0 10 10"><path d="M2.2 0.6V8" stroke="#5a5ab8" stroke-width="1.7"/><path d="M0.6 6.6L2.2 9.2L3.8 6.6Z" fill="#3a3a9a"/><path d="M5.2 1.2V4.4M7.8 0.6V3.8" stroke="#1a1a6a" stroke-width="0.9"/><path d="M4.2 3.6L5.2 5.4L6.2 3.6ZM6.8 3L7.8 4.8L8.8 3Z" fill="#1a1a6a"/></svg>
<span class="t" style="left:40.8px;top:129.8px;font-size:7.2px;transform:scaleX(0.884);transform-origin:0 0">Lastgruppen</span>
<svg class="abs" style="left:28.4px;top:138.4px" width="9.6" height="9.6" viewBox="0 0 10 10"><path d="M2.2 0.6V8" stroke="#5a5ab8" stroke-width="1.7"/><path d="M0.6 6.6L2.2 9.2L3.8 6.6Z" fill="#3a3a9a"/><path d="M5.2 1.2V4.4M7.8 0.6V3.8" stroke="#1a1a6a" stroke-width="0.9"/><path d="M4.2 3.6L5.2 5.4L6.2 3.6ZM6.8 3L7.8 4.8L8.8 3Z" fill="#1a1a6a"/><circle cx="7.4" cy="7.2" r="1.7" fill="#d8d020" stroke="#8a8a30" stroke-width="0.4"/></svg>
<span class="t" style="left:40.8px;top:139.4px;font-size:7.2px;transform:scaleX(0.884);transform-origin:0 0">LF-Kombinationen</span>
<svg class="abs" style="left:28.4px;top:148.0px" width="9.6" height="9.6" viewBox="0 0 10 10"><path d="M2.2 0.6V8" stroke="#5a5ab8" stroke-width="1.7"/><path d="M0.6 6.6L2.2 9.2L3.8 6.6Z" fill="#3a3a9a"/><path d="M5.2 1.2V4.4M7.8 0.6V3.8" stroke="#1a1a6a" stroke-width="0.9"/><path d="M4.2 3.6L5.2 5.4L6.2 3.6ZM6.8 3L7.8 4.8L8.8 3Z" fill="#1a1a6a"/><circle cx="7.4" cy="7.2" r="1.7" fill="#d8d020" stroke="#8a8a30" stroke-width="0.4"/></svg>
<span class="t" style="left:40.8px;top:149.0px;font-size:7.2px;transform:scaleX(0.884);transform-origin:0 0">Nichtlineare LFK</span>
<svg class="abs" style="left:28.4px;top:157.6px" width="9.6" height="9.6" viewBox="0 0 10 10"><path d="M2.2 0.6V8" stroke="#5a5ab8" stroke-width="1.7"/><path d="M0.6 6.6L2.2 9.2L3.8 6.6Z" fill="#3a3a9a"/><path d="M5.2 1.2V4.4M7.8 0.6V3.8" stroke="#1a1a6a" stroke-width="0.9"/><path d="M4.2 3.6L5.2 5.4L6.2 3.6ZM6.8 3L7.8 4.8L8.8 3Z" fill="#1a1a6a"/><circle cx="7.4" cy="7.2" r="1.7" fill="#d8d020" stroke="#8a8a30" stroke-width="0.4"/></svg>
<span class="t" style="left:40.8px;top:158.6px;font-size:7.2px;transform:scaleX(0.884);transform-origin:0 0">Stabilitäts-LFK</span>
<svg class="abs" style="left:28.4px;top:167.2px" width="9.6" height="9.6" viewBox="0 0 10 10"><path d="M2.2 0.6V8" stroke="#5a5ab8" stroke-width="1.7"/><path d="M0.6 6.6L2.2 9.2L3.8 6.6Z" fill="#3a3a9a"/><path d="M5.2 1.2V4.4M7.8 0.6V3.8" stroke="#1a1a6a" stroke-width="0.9"/><path d="M4.2 3.6L5.2 5.4L6.2 3.6ZM6.8 3L7.8 4.8L8.8 3Z" fill="#1a1a6a"/><circle cx="7.4" cy="7.2" r="1.7" fill="#d8d020" stroke="#8a8a30" stroke-width="0.4"/></svg>
<span class="t" style="left:40.8px;top:168.2px;font-size:7.2px;transform:scaleX(0.884);transform-origin:0 0">Stahlbeton-LFK</span>
<svg class="abs" style="left:28.4px;top:176.8px" width="9.6" height="9.6" viewBox="0 0 10 10"><rect x="4" y="0.4" width="5" height="5" fill="#a8a8e8" stroke="#3838a8" stroke-width="0.9"/><path d="M5 2H8M5 3.6H8" stroke="#eef" stroke-width="0.7"/><path d="M0.6 8.8H9.4" stroke="#1a1a1a" stroke-width="1.2"/><path d="M2 3V8" stroke="#3a3a9a" stroke-width="1.4"/><path d="M4 8V6.4H8.6V8" fill="none" stroke="#333" stroke-width="0.8"/></svg>
<span class="t" style="left:40.8px;top:177.8px;font-size:7.2px;transform:scaleX(0.884);transform-origin:0 0">Ergebnisklassen</span>
<svg class="abs" style="left:17.2px;top:186.4px" width="9.6" height="9.6" viewBox="0 0 10 10"><path d="M1.6 9V1.4H9" fill="none" stroke="#8a8200" stroke-width="2"/><path d="M1.6 9V1.4H9" fill="none" stroke="#d8d020" stroke-width="0.9"/><path d="M1.2 9L4.6 4.2" stroke="#c02060" stroke-width="0.9"/><circle cx="4.4" cy="4.4" r="0.9" fill="#6030a0"/></svg>
<span class="t" style="left:29.6px;top:187.4px;font-size:7.2px;transform:scaleX(0.884);transform-origin:0 0">Absenzen</span>
<svg class="abs" style="left:17.2px;top:196.0px" width="9.6" height="9.6" viewBox="0 0 10 10"><rect x="1.6" y="0.6" width="6.6" height="8.6" rx="0.8" fill="#d8e4d8" stroke="#2a3a2a" stroke-width="1.1"/><rect x="2.6" y="1.4" width="4.6" height="2" fill="#2233dd"/><path d="M3 5H7M3 6.4H7M3 7.8H7" stroke="#9aa" stroke-width="0.7"/></svg>
<span class="t" style="left:29.6px;top:197.0px;font-size:7.2px;transform:scaleX(0.884);transform-origin:0 0">Berechnung, FE-Netz</span>
<svg class="abs" style="left:28.4px;top:205.6px" width="9.6" height="9.6" viewBox="0 0 10 10"><path d="M0.8 6.5V1.4H4" fill="none" stroke="#1a1a1a" stroke-width="1"/><rect x="3.8" y="1.4" width="5.2" height="7.6" fill="#e8d048" stroke="#33336a" stroke-width="1"/><rect x="5.4" y="3" width="2" height="3" fill="#e88020"/></svg>
<span class="t" style="left:40.8px;top:206.6px;font-size:7.2px;transform:scaleX(0.884);transform-origin:0 0">Strukturdaten kontrollieren</span>
<svg class="abs" style="left:28.4px;top:215.2px" width="9.6" height="9.6" viewBox="0 0 10 10"><ellipse cx="5" cy="7" rx="4.4" ry="1.3" fill="#d8d020" stroke="#77701a" stroke-width="0.4"/><circle cx="5" cy="7.2" r="1.7" fill="#1111dd"/><circle cx="3" cy="2.6" r="0.9" fill="#44a"/><circle cx="7" cy="2.6" r="0.9" fill="#a4a"/><path d="M3 3.4L4.6 5.8M7 3.4L5.4 5.8" stroke="#558" stroke-width="0.6"/></svg>
<span class="t" style="left:40.8px;top:216.2px;font-size:7.2px;transform:scaleX(0.884);transform-origin:0 0">Teile/Knoten koppeln</span>
<svg class="abs" style="left:28.4px;top:224.8px" width="9.6" height="9.6" viewBox="0 0 10 10" opacity="0.55"><path d="M2.4 1.6V8.6M0.4 6H4.4" stroke="#4a5a9a" stroke-width="0.8"/><path d="M5 2H9.4V6.4L5 4.4Z" fill="none" stroke="#3a4a8a" stroke-width="0.7"/></svg>
<span class="t" style="left:40.8px;top:225.8px;font-size:7.2px;color:#d8dce8;transform:scaleX(0.884);transform-origin:0 0">FE-Netz einstellen</span>
<svg class="abs" style="left:28.4px;top:234.4px" width="9.6" height="9.6" viewBox="0 0 10 10"><path d="M2.2 0.2V8" stroke="#6a6ad0" stroke-width="1.9"/><path d="M0.4 6.8L2.2 9.6L4 6.8Z" fill="#4a4ab8"/><path d="M5.2 1.2V4.4M7.8 0.6V3.8" stroke="#1a1a6a" stroke-width="0.9"/><path d="M4.2 3.6L5.2 5.4L6.2 3.6ZM6.8 3L7.8 4.8L8.8 3Z" fill="#1a1a6a"/></svg>
<span class="t" style="left:40.8px;top:235.4px;font-size:7.2px;transform:scaleX(0.884);transform-origin:0 0">Rechenkern einstellen</span>
<svg class="abs" style="left:28.4px;top:244.0px" width="9.6" height="9.6" viewBox="0 0 10 10"><rect x="0.8" y="1.6" width="6.4" height="6.6" fill="#c89a9a"/><path d="M0.8 1.6L7.2 8.2M7.2 1.6L0.8 8.2M4 1.6V8.2M0.8 4.9H7.2" stroke="#a07a7a" stroke-width="0.6"/><path d="M7.2 1L8.8 2.2L7.4 3.4M7.4 6.4L9 7.6L7.4 9" fill="none" stroke="#1a1a1a" stroke-width="1.1"/></svg>
<span class="t" style="left:40.8px;top:245.0px;font-size:7.2px;transform:scaleX(0.884);transform-origin:0 0">Lokale Netzverdichtung</span>
<svg class="abs" style="left:28.4px;top:253.6px" width="9.6" height="9.6" viewBox="0 0 10 10"><path d="M3 0.8H7L9.2 3V7L7 9.2H3L0.8 7V3Z" fill="#8c8888" stroke="#5a5858" stroke-width="0.7"/><path d="M2 2L8 8M8 2L2 8" stroke="#c08a8a" stroke-width="0.9"/></svg>
<span class="t" style="left:40.8px;top:254.6px;font-size:7.2px;transform:scaleX(0.884);transform-origin:0 0">Netzgenerierung</span>
<svg class="abs" style="left:28.4px;top:263.2px" width="9.6" height="9.6" viewBox="0 0 10 10"><path d="M1.4 1V9.4M8.6 1V9.4" stroke="#cc1122" stroke-width="1.2"/><path d="M1.4 2.2H8.6" stroke="#cc1122" stroke-width="1"/><path d="M1.4 4.4H8.6" stroke="#d8d020" stroke-width="1.1"/><path d="M1.4 6.4H8.6" stroke="#44aa44" stroke-width="0.9"/><path d="M1.4 8.2H8.6" stroke="#cc1122" stroke-width="1"/><path d="M5 1V9" stroke="#cc1122" stroke-width="0.7"/><rect x="5.4" y="0" width="4" height="4" fill="#8899cc" stroke="#3355cc" stroke-width="0.7"/></svg>
<span class="t" style="left:40.8px;top:264.2px;font-size:7.2px;transform:scaleX(0.884);transform-origin:0 0">Berechnung</span>
<svg class="abs" style="left:28.4px;top:272.8px" width="9.6" height="9.6" viewBox="0 0 10 10"><path d="M1.4 1V9.4M8.6 1V9.4" stroke="#cc1122" stroke-width="1.2"/><path d="M1.4 2.2H8.6" stroke="#cc1122" stroke-width="1"/><path d="M1.4 4.4H8.6" stroke="#d8d020" stroke-width="1.1"/><path d="M1.4 6.4H8.6" stroke="#44aa44" stroke-width="0.9"/><path d="M1.4 8.2H8.6" stroke="#cc1122" stroke-width="1"/><path d="M5 1V9" stroke="#cc1122" stroke-width="0.7"/></svg>
<span class="t" style="left:40.8px;top:273.8px;font-size:7.2px;transform:scaleX(0.884);transform-origin:0 0">Hintergrundberechnung</span>
<svg class="abs" style="left:28.4px;top:282.4px" width="9.6" height="9.6" viewBox="0 0 10 10"><path d="M0.6 9V6.2H8.6V9" fill="none" stroke="#1a1a1a" stroke-width="1"/><path d="M2 6.2L3.4 4.8H5.4" fill="none" stroke="#444" stroke-width="0.8"/><path d="M6 1.4L8.4 0.6L9.2 3.4L8.4 6L6.4 5Z" fill="#2a2a2a"/><circle cx="7.2" cy="2.6" r="0.8" fill="#d0d060"/></svg>
<span class="t" style="left:40.8px;top:283.4px;font-size:7.2px;transform:scaleX(0.884);transform-origin:0 0">Autodesign</span>
<svg class="abs" style="left:17.2px;top:292.0px" width="9.6" height="9.6" viewBox="0 0 10 10"><path d="M1.6 0.8H4V3H9V5.2H4V9.2H1.6Z" fill="#e0d860" stroke="#6a6410" stroke-width="0.8"/><path d="M2.8 1V9" stroke="#fffbc0" stroke-width="0.6"/></svg>
<span class="t" style="left:29.6px;top:293.0px;font-size:7.2px;transform:scaleX(0.884);transform-origin:0 0">Stahl</span>
<svg class="abs" style="left:17.2px;top:301.6px" width="9.6" height="9.6" viewBox="0 0 10 10"><path d="M0.6 0.8H9.4V3.4H7V7.6L6.2 9.2H3.8L3 7.6V3.4H0.6Z" fill="#10f0f0" stroke="#0aa8a8" stroke-width="0.5"/></svg>
<span class="t" style="left:29.6px;top:302.6px;font-size:7.2px;transform:scaleX(0.884);transform-origin:0 0">Beton</span>
<svg class="abs" style="left:17.2px;top:311.2px" width="9.6" height="9.6" viewBox="0 0 10 10"><path d="M1 2.4Q3 0.8 5 2.4Q7 0.8 9 2.4V8.6Q7 7.2 5 8.6Q3 7.2 1 8.6Z" fill="#f4ecc8" stroke="#4a3a10" stroke-width="1"/><path d="M5 2.4V8.6" stroke="#4a3a10" stroke-width="0.8"/><path d="M1 8.6Q3 8 5 9.4Q7 8 9 8.6" fill="none" stroke="#8a7020" stroke-width="1"/></svg>
<span class="t" style="left:29.6px;top:312.2px;font-size:7.2px;transform:scaleX(0.884);transform-origin:0 0">Dokument</span>
<svg class="abs" style="left:17.2px;top:320.8px" width="9.6" height="9.6" viewBox="0 0 10 10"><path d="M1 1L1 7.4L6.6 7.4Z" fill="#7aa0b8" stroke="#3a5a70" stroke-width="0.7"/><path d="M8.4 0.6L4.2 6.6" stroke="#2a4a2a" stroke-width="1.4"/><path d="M0.6 8.6H9.4" stroke="#5a6a6a" stroke-width="1.5"/></svg>
<span class="t" style="left:29.6px;top:321.8px;font-size:7.2px;transform:scaleX(0.884);transform-origin:0 0">Zeichnungswerkzeuge</span>
<svg class="abs" style="left:17.2px;top:330.4px" width="9.6" height="9.6" viewBox="0 0 10 10"><rect x="1.6" y="0.6" width="6.6" height="8.8" fill="#8a8a8a" stroke="#1a1a1a" stroke-width="1.1"/><path d="M1.6 3.4H8.2M1.6 6.2H8.2M4.9 0.6V9.4" stroke="#1a1a1a" stroke-width="0.9"/></svg>
<span class="t" style="left:29.6px;top:331.4px;font-size:7.2px;transform:scaleX(0.884);transform-origin:0 0">Bibliotheken</span>
<svg class="abs" style="left:17.2px;top:340.0px" width="9.6" height="9.6" viewBox="0 0 10 10"><path d="M1.2 8.8L7.6 1.6" stroke="#1a1a1a" stroke-width="1.4"/><path d="M1.4 1.8L8.4 9" stroke="#1a1a1a" stroke-width="1.3"/><path d="M5.4 0.8L8.8 2.2L8.2 3.6" fill="none" stroke="#3a6a6a" stroke-width="1.3"/></svg>
<span class="t" style="left:29.6px;top:341.0px;font-size:7.2px;transform:scaleX(0.884);transform-origin:0 0">Werkzeuge</span>
</div>
<div class="abs" style="left:157.4px;top:56.4px;width:1.6px;height:584.4px;background:#7c7a76"></div>
<div class="abs" style="left:158px;top:56.2px;width:802px;height:1px;background:#7c7a76"></div>
<div class="abs" id="viewport" style="left:159px;top:57px;width:789.4px;height:571.4px;background:#fff;"></div>
<svg class="abs" id="scene" style="left:0;top:0;will-change:transform" width="960" height="720" viewBox="0 0 960 720"><defs>
<linearGradient id="gd1" x1="0" y1="0" x2="1" y2="0"><stop offset="0" stop-color="#4e7f4c"/><stop offset="0.35" stop-color="#6d9c68"/><stop offset="0.7" stop-color="#4d7e4b"/><stop offset="1" stop-color="#2f5f36"/></linearGradient>
<linearGradient id="gd2" x1="0" y1="0.2" x2="1" y2="0"><stop offset="0" stop-color="#3f7040"/><stop offset="0.4" stop-color="#5d8e59"/><stop offset="0.75" stop-color="#44763f"/><stop offset="1" stop-color="#2b5a33"/></linearGradient>
<linearGradient id="gl1" x1="0" y1="0" x2="1" y2="0"><stop offset="0" stop-color="#92bd94"/><stop offset="0.5" stop-color="#a3cba4"/><stop offset="1" stop-color="#90bb92"/></linearGradient>
<linearGradient id="gl2" x1="0" y1="0" x2="0" y2="1"><stop offset="0" stop-color="#8cb98d"/><stop offset="1" stop-color="#aed6ad"/></linearGradient>
<linearGradient id="gstr" x1="0" y1="0" x2="0" y2="1"><stop offset="0" stop-color="#b3d0b4"/><stop offset="0.2" stop-color="#a5bfa7"/><stop offset="0.5" stop-color="#98ad9b"/><stop offset="0.8" stop-color="#8d9e90"/><stop offset="1" stop-color="#88968a"/></linearGradient>
<linearGradient id="gpur" x1="0" y1="0" x2="1" y2="0"><stop offset="0" stop-color="#5c5f9c"/><stop offset="0.38" stop-color="#5a5d98"/><stop offset="0.4" stop-color="#555992"/><stop offset="0.62" stop-color="#4f528a"/><stop offset="0.64" stop-color="#5a5c84"/><stop offset="0.8" stop-color="#4e5078"/><stop offset="0.9" stop-color="#484e80"/><stop offset="1" stop-color="#484c80"/></linearGradient>
<linearGradient id="gbot" x1="0" y1="0" x2="1" y2="0"><stop offset="0" stop-color="#848773"/><stop offset="0.6" stop-color="#808372"/><stop offset="0.85" stop-color="#7c7e6c"/><stop offset="1" stop-color="#6e6c58"/></linearGradient>
</defs>
<g><rect x="159" y="362.5" width="120" height="41.5" fill="#a99d6f"/><rect x="159" y="404" width="120" height="39" fill="#5f5672"/><rect x="220.6" y="404" width="9.4" height="38.5" fill="#5a506a"/><rect x="256" y="404" width="9" height="38.5" fill="#5a506a"/><rect x="159" y="442.5" width="120" height="20" fill="#8b792d"/><path d="M159 400H279" stroke="#7a6c40" stroke-width="0.6"/><path d="M159 403.8H279" stroke="#6a5428" stroke-width="0.8"/><rect x="279" y="362.5" width="536" height="41.5" fill="url(#gstr)"/><path d="M279 367.5H815" stroke="#7f9483" stroke-width="0.5" opacity="0.7"/><path d="M279 372H815" stroke="#7f9483" stroke-width="0.5" opacity="0.7"/><path d="M279 376.5H815" stroke="#7f9483" stroke-width="0.5" opacity="0.7"/><path d="M279 381H815" stroke="#7f9483" stroke-width="0.5" opacity="0.7"/><path d="M279 385.5H815" stroke="#7f9483" stroke-width="0.5" opacity="0.7"/><path d="M279 390H815" stroke="#7f9483" stroke-width="0.5" opacity="0.7"/><path d="M279 394.5H815" stroke="#7f9483" stroke-width="0.5" opacity="0.7"/><path d="M279 399H815" stroke="#7f9483" stroke-width="0.5" opacity="0.7"/><rect x="279" y="404" width="401" height="39" fill="url(#gpur)"/><rect x="440" y="400.5" width="92" height="3.5" fill="#7f8c84" opacity="0.8"/><path d="M440.5 404V442.5" stroke="#8a8a9a" stroke-width="0.6"/><rect x="279" y="442.5" width="401" height="20" fill="url(#gbot)"/><rect x="279" y="380" width="1.6" height="24" fill="#4a4a8a"/><path d="M680 404L812 362.5H815V404Z" fill="#8b8269"/><path d="M748 383L812 362.5H815V404H748Z" fill="#989880" opacity="0.55"/><rect x="680" y="404" width="120" height="39" fill="#4b416c"/><rect x="680" y="442.5" width="120" height="20" fill="#6b5c34"/><rect x="748" y="442.5" width="52" height="20" fill="#6a6230"/><path d="M702 395.1V462" stroke="#8a8a86" stroke-width="0.6" opacity="0.8"/><path d="M726 387.5V462" stroke="#8a8a86" stroke-width="0.6" opacity="0.8"/><path d="M748 380.6V462" stroke="#8a8a86" stroke-width="0.6" opacity="0.8"/><path d="M770 373.7V462" stroke="#8a8a86" stroke-width="0.6" opacity="0.8"/><path d="M792 366.8V462" stroke="#8a8a86" stroke-width="0.6" opacity="0.8"/><rect x="800" y="404" width="11.2" height="58.5" fill="#8e8c5c"/><rect x="811" y="404" width="4.6" height="58.5" fill="#a8a88c"/><rect x="770" y="404" width="12" height="39" fill="#545088" opacity="0.7"/><rect x="793" y="362.5" width="22" height="41.5" fill="#a2a48a" opacity="0.75"/><rect x="815" y="362.5" width="132.5" height="100" fill="#8a856a"/><rect x="815" y="362.5" width="10" height="100" fill="#8b7b58"/><path d="M815 402L945 362.5" stroke="#5e4a22" stroke-width="0.8"/><path d="M680 404L812 362.5" stroke="#6a5a3a" stroke-width="0.6"/><path d="M945.6 362.5V462" stroke="#6e6444" stroke-width="1"/><path d="M159 362.5H947.5M159 462.5H947.5" stroke="#2f8a4c" stroke-width="0.9"/></g>
<g><path d="M256.0 315.6L371.4 256.0C375.5 257.3 383.1 262.8 391.0 268.0C398.9 273.2 415.2 283.4 420.0 286.5L443.0 312.0L390.0 316.5L257.0 334.0C272 324 272 316 256 315Z" fill="url(#gl1)"/><path d="M550.4 255.4C545.3 259.5 529.2 271.1 520.0 280.0C510.8 288.9 499.2 304.2 495.0 309.0L530.0 310.0L567.5 311.5L626.0 316.5L598.0 290.0Z" fill="url(#gl1)"/><path d="M408.0 280.0C410.0 281.1 415.2 284.8 420.0 286.5C424.8 288.2 431.3 289.8 437.0 290.5C442.7 291.2 446.0 291.4 454.0 290.6C462.0 289.9 474.7 288.9 485.0 286.0C495.3 283.1 507.3 277.0 516.0 273.0C524.7 269.0 531.3 264.9 537.0 262.0C542.7 259.1 548.2 256.5 550.4 255.4C545.3 259.5 529.2 271.1 520.0 280.0C510.8 288.9 502.8 300.0 495.0 309.0C487.2 318.0 477.1 329.8 473.5 334.0Z" fill="url(#gd1)"/><path d="M703.0 255.2C701.3 257.1 696.2 262.3 692.6 266.4C689.0 270.5 685.8 273.1 681.1 279.7C676.4 286.3 668.8 298.9 664.4 306.1C660.0 313.3 656.3 320.0 654.7 322.8C656.6 322.3 662.1 320.0 666.0 320.0C669.9 320.0 674.5 321.4 678.0 323.0C681.5 324.6 684.6 328.1 686.7 329.7C688.8 331.3 690.1 332.3 690.8 332.8L735.0 328.0L778.0 323.0L736.0 284.0Z" fill="url(#gl2)"/><path d="M703.0 255.2C701.3 257.1 696.2 262.3 692.6 266.4C689.0 270.5 685.8 273.1 681.1 279.7C676.4 286.3 667.2 301.7 664.4 306.1L661.7 309.6C666.3 308.1 681.3 303.4 689.4 300.5C697.5 297.6 704.9 294.1 710.3 292.2C715.7 290.3 717.0 289.6 722.0 289.2C727.0 288.8 737.0 289.9 740.0 290.0L736.0 284.0Z" fill="#7fb07e" opacity="0.9"/><path d="M598.0 290.0C600.5 289.5 607.0 288.6 613.0 287.0C619.0 285.4 627.0 282.9 634.0 280.6C641.0 278.3 648.0 275.8 655.0 273.0C662.0 270.2 668.0 267.0 676.0 264.0C684.0 261.0 698.5 256.7 703.0 255.2C701.3 257.1 696.2 262.3 692.6 266.4C689.0 270.5 685.8 273.1 681.1 279.7C676.4 286.3 668.8 298.9 664.4 306.1C660.0 313.3 657.3 318.2 654.7 322.8C652.1 327.4 650.0 332.1 649.0 334.0Z" fill="url(#gd2)"/><path d="M815.4 255.4C816.6 260.7 819.4 279.4 822.6 287.0C825.8 294.6 830.7 297.1 834.7 300.8C838.8 304.5 842.5 307.2 846.9 309.4C851.3 311.6 858.6 313.2 861.0 314.0L861.0 315.5L793.5 316.5C794.4 309.5 796.2 299.7 798.8 292.0C801.4 284.3 806.2 273.1 809.0 267.0C811.8 260.9 814.3 257.3 815.4 255.4Z" fill="url(#gl1)"/><path d="M736.0 284.0C740.5 282.3 755.0 276.8 763.0 274.0C771.0 271.2 777.0 269.5 784.0 267.0C791.0 264.5 799.8 260.7 805.0 258.8C810.2 256.9 813.7 256.0 815.4 255.4C814.3 257.3 811.8 260.9 809.0 267.0C806.2 273.1 801.4 284.3 798.8 292.0C796.2 299.7 795.1 306.2 793.5 313.0C791.9 319.8 790.1 329.7 789.4 333.0Z" fill="url(#gd2)"/><path d="M372.4 255.2C375.5 257.3 383.1 262.8 391.0 268.0C398.9 273.2 412.3 282.8 420.0 286.5C427.7 290.2 431.3 289.8 437.0 290.5C442.7 291.2 446.0 291.4 454.0 290.6C462.0 289.9 474.7 288.9 485.0 286.0C495.3 283.1 507.3 277.0 516.0 273.0C524.7 269.0 531.3 264.9 537.0 262.0C542.7 259.1 548.2 256.5 550.4 255.4" fill="none" stroke="#2c422e" stroke-width="0.8"/><path d="M598.0 290.0C600.5 289.5 607.0 288.6 613.0 287.0C619.0 285.4 627.0 282.9 634.0 280.6C641.0 278.3 648.0 275.8 655.0 273.0C662.0 270.2 668.0 267.0 676.0 264.0C684.0 261.0 698.5 256.7 703.0 255.2" fill="none" stroke="#2c422e" stroke-width="0.8"/><path d="M736.0 284.0C740.5 282.3 755.0 276.8 763.0 274.0C771.0 271.2 777.0 269.5 784.0 267.0C791.0 264.5 799.8 260.7 805.0 258.8C810.2 256.9 813.7 256.0 815.4 255.4" fill="none" stroke="#2c422e" stroke-width="0.8"/><path d="M408 281L473.5 334L495 309L520 280L550.4 255.4" fill="none" stroke="#2c422e" stroke-width="0.8"/><path d="M550.4 255.4L598.0 290.0L649.0 334.0" fill="none" stroke="#2c422e" stroke-width="0.8"/><path d="M703.0 255.2L736.0 284.0L789.4 333.0" fill="none" stroke="#2c422e" stroke-width="0.8"/><path d="M256.0 315.0C272 316 272 324 257 334" fill="none" stroke="#3a5a3a" stroke-width="0.6"/><path d="M815.4 255.4C816.6 260.7 819.4 279.4 822.6 287.0C825.8 294.6 830.7 297.1 834.7 300.8C838.8 304.5 842.5 307.2 846.9 309.4C851.3 311.6 858.6 313.2 861.0 314.0" fill="none" stroke="#3a5a3a" stroke-width="0.6"/></g>
<g><path d="M255.6 314.4L370.6 254.7" fill="none" stroke="#3a3a3a" stroke-width="2.6"/><path d="M255.6 314.4L370.6 254.7" fill="none" stroke="#fff" stroke-width="1.5"/><path d="M257.0 334.4L390.0 316.4L443.0 311.6" fill="none" stroke="#3a3a3a" stroke-width="2.2" stroke-dasharray="5 1.4"/><path d="M257.0 334.4L390.0 316.4L443.0 311.6" fill="none" stroke="#fff" stroke-width="1.1"/><path d="M495.0 309.6L530.0 310.6L567.5 312.0L626.0 317.2" fill="none" stroke="#3a3a3a" stroke-width="2.2"/><path d="M495.0 309.6L530.0 310.6L567.5 312.0L626.0 317.2" fill="none" stroke="#fff" stroke-width="1.1"/><path d="M654.7 324.4L686.0 333.4" fill="none" stroke="#3a3a3a" stroke-width="2.0" stroke-dasharray="5 1.4"/><path d="M654.7 324.4L686.0 333.4" fill="none" stroke="#fff" stroke-width="0.9"/><path d="M690.0 333.6L735.0 328.6L778.0 323.6" fill="none" stroke="#3a3a3a" stroke-width="2.0" stroke-dasharray="5 1.4"/><path d="M690.0 333.6L735.0 328.6L778.0 323.6" fill="none" stroke="#fff" stroke-width="0.9"/><path d="M793.5 320.6L861.0 315.0" fill="none" stroke="#3a3a3a" stroke-width="2.2" stroke-dasharray="5 1.4"/><path d="M793.5 320.6L861.0 315.0" fill="none" stroke="#fff" stroke-width="1.1"/><path d="M793.0 316.5L861.0 314.6" fill="none" stroke="#222" stroke-width="0.6"/><path d="M473.5 334.0L495.0 309.4" fill="none" stroke="#3a3a3a" stroke-width="1.8"/><path d="M473.5 334.0L495.0 309.4" fill="none" stroke="#fff" stroke-width="0.7"/><path d="M649.0 334.0L654.7 323.6" fill="none" stroke="#3a3a3a" stroke-width="1.8"/><path d="M649.0 334.0L654.7 323.6" fill="none" stroke="#fff" stroke-width="0.7"/><path d="M254.0 313.5L204.4 362.5" fill="none" stroke="#222" stroke-width="0.8"/><path d="M254.0 336.0L233.0 362.5L204.0 404.0" fill="none" stroke="#222" stroke-width="0.7"/><path d="M473.5 334.0L472.6 362.5" fill="none" stroke="#555" stroke-width="0.9"/><path d="M473.0 338.0L472.6 362.5" fill="none" stroke="#e8e8a0" stroke-width="0.5" stroke-dasharray="3 2"/><path d="M473.5 334.0L482.0 362.5" fill="none" stroke="#222" stroke-width="0.8"/><path d="M649.0 334.0L648.6 362.5" fill="none" stroke="#555" stroke-width="0.9"/><path d="M648.9 338.0L648.6 362.5" fill="none" stroke="#e8e8a0" stroke-width="0.5" stroke-dasharray="3 2"/><path d="M649.0 334.0L665.5 362.5" fill="none" stroke="#222" stroke-width="0.8"/><path d="M789.4 333.0L813.0 362.5" fill="none" stroke="#222" stroke-width="0.8"/><path d="M789.4 333.0L789.0 362.5" fill="none" stroke="#222" stroke-width="0.8" stroke-dasharray="3 1.4"/><path d="M372.4 255.2C371.5 261.0 368.6 279.7 367.0 290.0C365.4 300.3 364.7 304.9 363.0 317.0C361.3 329.1 358.0 354.9 357.0 362.5" fill="none" stroke="#222" stroke-width="0.8" stroke-dasharray="3 1.2"/><path d="M372.4 255.2L396.6 362.5" fill="none" stroke="#222" stroke-width="0.8" stroke-dasharray="3 1.2"/><path d="M372.4 255.2C371.7 260.2 369.3 274.9 368.0 285.0C366.7 295.1 365.1 310.8 364.5 316.0" fill="none" stroke="#222" stroke-width="0.6" stroke-dasharray="2 1"/><path d="M549.8 256.0L547.6 362.5" fill="none" stroke="#222" stroke-width="0.9" stroke-dasharray="4 1.6"/><path d="M550.4 255.4L582.0 362.5" fill="none" stroke="#222" stroke-width="0.8" stroke-dasharray="3 1.2"/><path d="M550.4 255.4L567.0 311.0" fill="none" stroke="#222" stroke-width="0.5"/><path d="M704.0 256.0L709.6 362.5" fill="none" stroke="#222" stroke-width="0.9" stroke-dasharray="4 1.6"/><path d="M703.0 255.2L738.4 362.5" fill="none" stroke="#222" stroke-width="0.8" stroke-dasharray="5 1"/><path d="M703.0 255.2L655.0 323.0" fill="none" stroke="#222" stroke-width="0.5"/><path d="M703.0 255.2L663.0 309.0" fill="none" stroke="#222" stroke-width="0.5"/><path d="M817.0 256.0L832.4 362.5" fill="none" stroke="#222" stroke-width="0.9" stroke-dasharray="3 1.4"/><path d="M815.4 255.4L852.0 362.5" fill="none" stroke="#222" stroke-width="0.8"/><path d="M815.4 255.4L861.0 314.0" fill="none" stroke="#222" stroke-width="0.8"/><path d="M863.0 319.0L877.4 362.5" fill="none" stroke="#222" stroke-width="0.8"/><path d="M863.0 319.0L889.4 362.5" fill="none" stroke="#222" stroke-width="0.8" stroke-dasharray="4 1"/><path d="M863.0 319.0L905.0 362.5" fill="none" stroke="#222" stroke-width="0.8"/><path d="M686.0 362.5L686.0 404.0" fill="none" stroke="#5a5a5a" stroke-width="0.6"/><path d="M689.2 362.5L689.2 404.0" fill="none" stroke="#5a5a5a" stroke-width="0.6"/><path d="M691.6 362.5L705.0 404.0" fill="none" stroke="#4a4a4a" stroke-width="0.6"/><path d="M252.8 362.5L252.8 404.0" fill="none" stroke="#5a4a2a" stroke-width="0.6"/><path d="M255.4 362.5L255.4 404.0" fill="none" stroke="#5a4a2a" stroke-width="0.6"/></g>
<g><path d="M254.0 314.0L254.0 362.5" stroke="#444" stroke-width="2.8"/><path d="M254.0 314.0L254.0 362.5" stroke="#d2d2d2" stroke-width="1.6"/><path d="M254.0 314.0L254.0 362.5" stroke="#f2f2f2" stroke-width="0.5"/><path d="M372.8 251.3L368.0 362.5" stroke="#444" stroke-width="3.4"/><path d="M372.8 251.3L368.0 362.5" stroke="#d2d2d2" stroke-width="2.2"/><path d="M372.8 251.3L368.0 362.5" stroke="#f2f2f2" stroke-width="1.1"/><path d="M551.0 251.3L537.4 362.5" stroke="#444" stroke-width="3.4"/><path d="M551.0 251.3L537.4 362.5" stroke="#d2d2d2" stroke-width="2.2"/><path d="M551.0 251.3L537.4 362.5" stroke="#f2f2f2" stroke-width="1.1"/><path d="M703.4 251.3L684.0 362.5" stroke="#444" stroke-width="3.4"/><path d="M703.4 251.3L684.0 362.5" stroke="#d2d2d2" stroke-width="2.2"/><path d="M703.4 251.3L684.0 362.5" stroke="#f2f2f2" stroke-width="1.1"/><path d="M816.0 251.4L790.4 362.5" stroke="#444" stroke-width="3.4"/><path d="M816.0 251.4L790.4 362.5" stroke="#d2d2d2" stroke-width="2.2"/><path d="M816.0 251.4L790.4 362.5" stroke="#f2f2f2" stroke-width="1.1"/><path d="M861.0 314.0L861.0 362.5" stroke="#444" stroke-width="2.8"/><path d="M861.0 314.0L861.0 362.5" stroke="#d2d2d2" stroke-width="1.6"/><path d="M861.0 314.0L861.0 362.5" stroke="#f2f2f2" stroke-width="0.5"/><path d="M688.5 338.0L693.0 362.5" stroke="#444" stroke-width="1.8"/><path d="M688.5 338.0L693.0 362.5" stroke="#d2d2d2" stroke-width="0.6"/><path d="M688.5 338.0L693.0 362.5" stroke="#f2f2f2" stroke-width="0.3"/><path d="M795.0 342.0L790.0 362.5" stroke="#444" stroke-width="1.4"/><path d="M795.0 342.0L790.0 362.5" stroke="#d2d2d2" stroke-width="0.2"/><path d="M795.0 342.0L790.0 362.5" stroke="#f2f2f2" stroke-width="0.3"/><rect x="371.3" y="251.3" width="3" height="3" rx="0.8" fill="#e4e4e4" stroke="#444" stroke-width="0.6"/><rect x="549.5" y="251.3" width="3" height="3" rx="0.8" fill="#e4e4e4" stroke="#444" stroke-width="0.6"/><rect x="701.9" y="251.3" width="3" height="3" rx="0.8" fill="#e4e4e4" stroke="#444" stroke-width="0.6"/><rect x="814.5" y="251.4" width="3" height="3" rx="0.8" fill="#e4e4e4" stroke="#444" stroke-width="0.6"/><rect x="252.5" y="312.5" width="3" height="2.4" fill="#ddd" stroke="#444" stroke-width="0.5"/><rect x="859.5" y="313.0" width="3" height="2.4" fill="#ddd" stroke="#444" stroke-width="0.5"/></g>
<path d="M181.3 584.2V601.7" stroke="#2828c8" stroke-width="0.9"/><path d="M181.3 601.7H199.4" stroke="#58d868" stroke-width="0.9"/>
<text x="183.4" y="589.6" font-family="Liberation Sans, sans-serif" font-size="5.2" font-weight="bold" fill="#2a2a7a">Z</text><text x="183.2" y="607.6" font-family="Liberation Sans, sans-serif" font-size="5.2" fill="#e05a5a">X</text><text x="201" y="607.6" font-family="Liberation Sans, sans-serif" font-size="5.2" fill="#58c868">Y</text></svg>
<div class="abs" style="left:179px;top:72.3px;width:57.4px;height:88.8px;background:#d4d0c8;box-shadow:inset 0.7px 0.7px 0 #f4f2ee,inset -0.7px -0.7px 0 #55524c,inset -1.4px -1.4px 0 #8c8880"></div>
<div class="abs" style="left:180.4px;top:73.5px;width:54.8px;height:10px;background:#0a246a"><span class="t" style="left:1.8px;top:1.3px;font-size:7.3px;font-weight:bold;color:#fff;transform:scaleX(0.867);transform-origin:0 0">Ansicht</span></div>
<svg class="abs" style="left:216px;top:76px" width="18" height="6" viewBox="0 0 18 6"><path d="M0.6 1.2H5.8L3.2 4.4Z" fill="#fff"/><path d="M11.6 0.8L15.4 5M15.4 0.8L11.6 5" stroke="#fff" stroke-width="1.1"/></svg>
<svg class="abs" style="left:182.9px;top:86.1px" width="9.8" height="9.8" viewBox="0 0 10 10"><ellipse cx="5" cy="6.6" rx="3.8" ry="2.5" fill="#20c8c0" stroke="#222" stroke-width="0.9"/><ellipse cx="5" cy="6.4" rx="1.6" ry="0.9" fill="#0a7a7a"/><path d="M3.4 0.6V3.6" stroke="#d01828" stroke-width="1"/><path d="M5.6 0.8L4.6 4" stroke="#34349a" stroke-width="1"/><path d="M2.2 4.4L4 3.2" stroke="#208030" stroke-width="0.9"/></svg>
<svg class="abs" style="left:196.1px;top:86.1px" width="9.8" height="9.8" viewBox="0 0 10 10"><ellipse cx="5" cy="6.6" rx="3.8" ry="2.5" fill="#20c8c0" stroke="#222" stroke-width="0.9"/><ellipse cx="5" cy="6.4" rx="1.6" ry="0.9" fill="#0a7a7a"/><path d="M3.4 0.6V3.6" stroke="#34349a" stroke-width="1"/><path d="M5.6 0.8L4.6 4" stroke="#d01828" stroke-width="1"/><path d="M2.2 4.4L4 3.2" stroke="#208030" stroke-width="0.9"/></svg>
<svg class="abs" style="left:209.5px;top:86.1px" width="9.8" height="9.8" viewBox="0 0 10 10"><ellipse cx="5" cy="6.6" rx="3.8" ry="2.5" fill="#20c8c0" stroke="#222" stroke-width="0.9"/><ellipse cx="5" cy="6.4" rx="1.6" ry="0.9" fill="#0a7a7a"/><path d="M3.4 0.6V3.6" stroke="#d01828" stroke-width="1"/><path d="M5.6 0.8L4.6 4" stroke="#34349a" stroke-width="1"/><path d="M2.2 4.4L4 3.2" stroke="#208030" stroke-width="0.9"/></svg>
<svg class="abs" style="left:222.7px;top:86.1px" width="9.8" height="9.8" viewBox="0 0 10 10"><ellipse cx="5" cy="6.6" rx="3.8" ry="2.5" fill="#20c8c0" stroke="#207070" stroke-width="0.9"/><ellipse cx="5" cy="6.4" rx="1.6" ry="0.9" fill="#0a7a7a"/><path d="M5 0.4V4" stroke="#d01828" stroke-width="1.1"/><path d="M5 0.4V2" stroke="#34349a" stroke-width="1.1"/></svg>
<svg class="abs" style="left:182.9px;top:101.9px" width="9.8" height="9.8" viewBox="0 0 10 10"><path d="M3.4 0.8V7" stroke="#2030c8" stroke-width="1.3"/><path d="M3.4 1L2.2 3H4.6Z" fill="#2030c8"/><path d="M3.4 6.4H8.6" stroke="#d01828" stroke-width="1.6"/><rect x="5" y="4.4" width="3" height="2.4" fill="#e05040"/><path d="M0.8 8.6H7" stroke="#30a848" stroke-width="1"/></svg>
<svg class="abs" style="left:196.1px;top:101.9px" width="9.8" height="9.8" viewBox="0 0 10 10"><circle cx="4.4" cy="4" r="3" fill="#d8f4f0" stroke="#207878" stroke-width="1"/><path d="M6.6 6.2L9.2 9.2" stroke="#1a1a1a" stroke-width="1.5"/><rect x="0.6" y="5.4" width="3.6" height="3.6" fill="#fff"/><path d="M1 7.2H3.8M2.4 5.8V8.6" stroke="#111" stroke-width="0.8"/></svg>
<svg class="abs" style="left:209.5px;top:101.9px" width="9.8" height="9.8" viewBox="0 0 10 10"><circle cx="4.4" cy="4" r="3" fill="#d8f4f0" stroke="#207878" stroke-width="1"/><path d="M6.6 6.2L9.2 9.2" stroke="#1a1a1a" stroke-width="1.5"/><rect x="0.6" y="5.4" width="3.6" height="3.6" fill="#fff"/><path d="M1 7.2H3.8" stroke="#111" stroke-width="0.8"/></svg>
<svg class="abs" style="left:222.7px;top:101.9px" width="9.8" height="9.8" viewBox="0 0 10 10"><circle cx="4.4" cy="4" r="3" fill="#d8f4f0" stroke="#207878" stroke-width="1"/><path d="M6.6 6.2L9.2 9.2" stroke="#1a1a1a" stroke-width="1.5"/><rect x="0.6" y="4.6" width="4.6" height="4" fill="#f4f4f4" stroke="#666" stroke-width="0.6"/></svg>
<svg class="abs" style="left:182.9px;top:117.1px" width="9.8" height="9.8" viewBox="0 0 10 10"><circle cx="4.4" cy="4" r="3" fill="#d8f4f0" stroke="#207878" stroke-width="1"/><path d="M6.6 6.2L9.2 9.2" stroke="#1a1a1a" stroke-width="1.5"/><path d="M0.4 8.4H5.6M0.4 8.4L1.6 7.4M0.4 8.4L1.6 9.4M5.6 8.4L4.4 7.4M5.6 8.4L4.4 9.4" stroke="#111" stroke-width="0.7" fill="none"/></svg>
<svg class="abs" style="left:196.1px;top:117.1px" width="9.8" height="9.8" viewBox="0 0 10 10"><circle cx="4.4" cy="4" r="3" fill="#e4e4e0" stroke="#aaa" stroke-width="1"/><path d="M6.6 6.2L9.2 9.2" stroke="#aaa" stroke-width="1.5"/><path d="M2.6 5.4V9M4.6 5.4V9" stroke="#aaa" stroke-width="0.8"/></svg>
<svg class="abs" style="left:209.5px;top:117.1px" width="9.8" height="9.8" viewBox="0 0 10 10"><path d="M1 3.8L3.4 1.6H9.2L8.4 6.4L6.4 9H1Z" fill="#d8d428" stroke="#222" stroke-width="0.9"/><path d="M1 3.8H6.8L9.2 1.6M6.8 3.8L6.4 9" fill="none" stroke="#222" stroke-width="0.7"/><path d="M2.6 0.4V2.4" stroke="#34349a" stroke-width="0.9"/></svg>
<svg class="abs" style="left:222.7px;top:117.1px" width="9.8" height="9.8" viewBox="0 0 10 10"><circle cx="5" cy="3.6" r="2.8" fill="#f8f040" stroke="#8a8410" stroke-width="0.7"/><rect x="3.8" y="6.2" width="2.4" height="2.8" fill="#2030c8"/><circle cx="4.2" cy="2.8" r="0.9" fill="#fff"/></svg>
<div class="abs" style="left:181px;top:128.6px;width:53px;height:0.7px;background:#a8a49c"></div><div class="abs" style="left:181px;top:129.3px;width:53px;height:0.7px;background:#f4f2ee"></div>
<svg class="abs" style="left:182.9px;top:132.5px" width="9.8" height="9.8" viewBox="0 0 10 10"><rect x="1" y="4" width="6.6" height="5" fill="#e05050" stroke="#34349a" stroke-width="1"/><path d="M2.4 6.4H6.2" stroke="#fff" stroke-width="0.7"/><path d="M1 4L2.6 2.4H6" fill="none" stroke="#34349a" stroke-width="0.9"/><path d="M6 3.6Q7 0.8 9 2.6L8.6 4.6" fill="none" stroke="#3a6aa8" stroke-width="0.9"/></svg>
<svg class="abs" style="left:196.1px;top:132.5px" width="9.8" height="9.8" viewBox="0 0 10 10"><rect x="1.6" y="3.6" width="7" height="5.6" fill="#dcdcd8" stroke="#a4a4a0" stroke-width="0.8"/><path d="M1.6 6.2H8.6M5 3.6V9.2" stroke="#a4a4a0" stroke-width="0.7"/><path d="M2.6 3.6L4 1.6H6.6" fill="none" stroke="#b4b4b0" stroke-width="0.8"/></svg>
<svg class="abs" style="left:214.9px;top:132.3px" width="9.8" height="9.8" viewBox="0 0 10 10"><path d="M1.2 1.2H8.8V4H5V6H8.8V8.8H1.2Z" fill="#f0ec50" stroke="#4a4a08" stroke-width="1"/></svg>
<div class="sep" style="left:210.4px;top:131.6px;height:11.6px"></div>
<svg class="abs" style="left:182.9px;top:148.7px" width="9.8" height="9.8" viewBox="0 0 10 10"><path d="M1 3.6L3.2 1.4H9.2V6.6L7 9H1Z" fill="#f4f4ff" stroke="#2030c8" stroke-width="1.1"/><path d="M1 3.6H7V9M7 3.6L9.2 1.4" fill="none" stroke="#2030c8" stroke-width="0.9"/><path d="M2.4 8L5.4 4.6" stroke="#222" stroke-width="1"/><rect x="2" y="4.4" width="2" height="2" fill="#d8d428"/></svg>
<div class="hdr" style="left:158px;top:645.2px;width:802px;height:10.2px;"><span class="t" style="left:2.2px;top:1.6px;font-size:7.4px;transform:scaleX(0.902);transform-origin:0 0">Befehlszeile</span></div>
<div class="abs" style="left:162.2px;top:676.9px;width:793.4px;height:11.8px;background:#fff;box-shadow:inset 1.3px 1.3px 0 #4a4844,inset -0.8px -0.8px 0 #f0eee8"><span class="t" style="left:3.4px;top:2.5px;font-size:7.2px;transform:scaleX(0.864);transform-origin:0 0">Befehl &gt;</span></div>
<div class="abs" style="left:159px;top:628.4px;width:789px;height:12.4px;background:#d4d0c8"></div>
<div class="abs" style="left:158.5px;top:628.6px;width:12.8px;height:12.4px;background:#f4f3ef;box-shadow:inset 0.7px 0.7px 0 #808080,inset -0.7px -0.7px 0 #fff"></div><svg class="abs" style="left:160.1px;top:630.0px" width="9.6" height="9.6" viewBox="0 0 10 10"><path d="M1 4L3 1.8H9V6.2L7 8.6H1Z M1 4H7V8.6M7 4L9 1.8" fill="none" stroke="#222" stroke-width="0.9"/></svg>
<div class="abs" style="left:171.8px;top:628.6px;width:12.8px;height:12.4px;background:#f4f3ef;box-shadow:inset 0.7px 0.7px 0 #808080,inset -0.7px -0.7px 0 #fff"></div><svg class="abs" style="left:173.4px;top:630.0px" width="9.6" height="9.6" viewBox="0 0 10 10"><path d="M1 4L3 1.8H9V6.2L7 8.6H1Z" fill="#d8d428" stroke="#222" stroke-width="0.9"/><path d="M1 4H7V8.6M7 4L9 1.8" fill="none" stroke="#222" stroke-width="0.8"/><rect x="1.6" y="4.6" width="2" height="3.6" fill="#f8f860"/></svg>
<div class="abs" style="left:186.8px;top:628.7px;width:12.8px;height:12.2px;box-shadow:inset 0.7px 0.7px 0 #fff,inset -0.7px -0.7px 0 #8c8880"></div>
<svg class="abs" style="left:188.4px;top:630.0px" width="9.6" height="9.6" viewBox="0 0 10 10"><circle cx="5" cy="2.2" r="1.4" fill="#2030c8"/><path d="M5 3.4L1.6 8H8.4Z" fill="#f0f0a0" stroke="#34349a" stroke-width="0.9"/><path d="M0.8 9H9.2" stroke="#34349a" stroke-width="0.9"/></svg>
<div class="abs" style="left:200.6px;top:628.7px;width:12.8px;height:12.2px;box-shadow:inset 0.7px 0.7px 0 #fff,inset -0.7px -0.7px 0 #8c8880"></div>
<svg class="abs" style="left:202.2px;top:630.0px" width="9.6" height="9.6" viewBox="0 0 10 10"><path d="M2.4 0.8V7.2" stroke="#34349a" stroke-width="1.3"/><path d="M0.8 8.4H9.6" stroke="#34349a" stroke-width="1"/><path d="M1 7.2H4" stroke="#34349a" stroke-width="1.2"/><path d="M4.6 7.6L6 5.6L7.4 7.4L8.6 4.6V7.8" fill="none" stroke="#555" stroke-width="0.8"/></svg>
<div class="abs" style="left:213.4px;top:628.7px;width:12.8px;height:12.2px;box-shadow:inset 0.7px 0.7px 0 #fff,inset -0.7px -0.7px 0 #8c8880"></div>
<svg class="abs" style="left:215.0px;top:630.0px" width="9.6" height="9.6" viewBox="0 0 10 10"><path d="M1.4 0.8V9.4" stroke="#34349a" stroke-width="0.9"/><rect x="3" y="1" width="6.2" height="3" fill="#e88090" stroke="#d01828" stroke-width="0.7"/><path d="M1.4 6H8M1.4 8H5" stroke="#34349a" stroke-width="0.8"/></svg>
<div class="abs" style="left:228.8px;top:628.7px;width:12.8px;height:12.2px;box-shadow:inset 0.7px 0.7px 0 #fff,inset -0.7px -0.7px 0 #8c8880"></div>
<svg class="abs" style="left:230.4px;top:630.0px" width="9.6" height="9.6" viewBox="0 0 10 10"><rect x="1" y="1" width="8" height="2.6" fill="#555"/><path d="M0.6 6.6H9.4" stroke="#2030c8" stroke-width="1"/><circle cx="5" cy="6.6" r="1.2" fill="#2030c8"/></svg>
<div class="abs" style="left:242.3px;top:628.7px;width:12.8px;height:12.2px;box-shadow:inset 0.7px 0.7px 0 #fff,inset -0.7px -0.7px 0 #8c8880"></div>
<svg class="abs" style="left:243.9px;top:630.0px" width="9.6" height="9.6" viewBox="0 0 10 10"><rect x="1" y="0.8" width="8" height="2.6" fill="#555"/><path d="M1 7.6Q2 4.4 5 5.4Q8.6 4.6 9 7.6Q5 9.6 1 7.6Z" fill="#c8c040" stroke="#3a3a10" stroke-width="0.8"/></svg>
<div class="abs" style="left:256.6px;top:628.7px;width:12.8px;height:12.2px;box-shadow:inset 0.7px 0.7px 0 #fff,inset -0.7px -0.7px 0 #8c8880"></div>
<svg class="abs" style="left:258.2px;top:630.0px" width="9.6" height="9.6" viewBox="0 0 10 10"><path d="M5 1L0.8 8.6H9.2Z" fill="none" stroke="#c03030" stroke-width="0.8"/><path d="M5 1V8.6M2.8 5H7.2L5 8.6Z" fill="none" stroke="#30a040" stroke-width="0.7"/><circle cx="5" cy="1.4" r="0.9" fill="#d01828"/></svg>
<div class="abs" style="left:272.0px;top:628.7px;width:12.8px;height:12.2px;box-shadow:inset 0.7px 0.7px 0 #fff,inset -0.7px -0.7px 0 #8c8880"></div>
<svg class="abs" style="left:273.6px;top:630.0px" width="9.6" height="9.6" viewBox="0 0 10 10"><path d="M3.4 1V9M5.6 1V9M7.8 1V9" stroke="#333" stroke-width="1.2"/><path d="M0.8 6.6L2.4 8.6" stroke="#34349a" stroke-width="1.1"/><path d="M1 8.8H9" stroke="#333" stroke-width="0.8"/></svg>
<div class="abs" style="left:287.2px;top:628.7px;width:12.8px;height:12.2px;box-shadow:inset 0.7px 0.7px 0 #fff,inset -0.7px -0.7px 0 #8c8880"></div>
<svg class="abs" style="left:288.8px;top:630.0px" width="9.6" height="9.6" viewBox="0 0 10 10"><rect x="0.8" y="2.4" width="6" height="6.8" fill="#d8d428" stroke="#2030c8" stroke-width="0.9"/><rect x="4.4" y="0.6" width="5" height="5" fill="#98b8e8" stroke="#2030c8" stroke-width="0.8"/><path d="M0.8 5.6H6.8M3.8 2.4V9.2" stroke="#2030c8" stroke-width="0.7"/></svg>
<div class="abs" style="left:300.5px;top:628.7px;width:12.8px;height:12.2px;box-shadow:inset 0.7px 0.7px 0 #fff,inset -0.7px -0.7px 0 #8c8880"></div>
<svg class="abs" style="left:302.1px;top:630.0px" width="9.6" height="9.6" viewBox="0 0 10 10"><rect x="1" y="1.4" width="5" height="7.6" fill="#c4c4c4" stroke="#9a9a9a" stroke-width="0.8"/><rect x="4.4" y="0.8" width="4.8" height="4.8" fill="#e4e4e4" stroke="#aaa" stroke-width="0.7"/></svg>
<div class="btn" style="left:315.4px;top:629px;width:8px;height:11.4px"></div><svg class="abs" style="left:317.6px;top:632.4px" width="3" height="5" viewBox="0 0 3 5"><path d="M2.8 0.2V4.8L0.2 2.5Z" fill="#111"/></svg>
<div class="abs" style="left:323.6px;top:629px;width:455.4px;height:11.6px;background:#eceae5"></div>
<div class="btn" style="left:565px;top:629px;width:8.2px;height:11.4px"></div>
<div class="btn" style="left:779px;top:629px;width:7.6px;height:11.4px"></div><svg class="abs" style="left:781.6px;top:632.4px" width="3" height="5" viewBox="0 0 3 5"><path d="M0.2 0.2V4.8L2.8 2.5Z" fill="#111"/></svg>
<div class="abs" style="left:787.6px;top:629px;width:78.4px;height:11.6px;background:linear-gradient(180deg,#222 0%,#484848 22%,#585858 50%,#444 78%,#222 100%);box-shadow:inset 0 0 0 0.8px #111"></div>
<div class="abs" style="left:868px;top:629px;width:79.6px;height:11.6px;background:linear-gradient(180deg,#222 0%,#484848 22%,#585858 50%,#444 78%,#222 100%);box-shadow:inset 0 0 0 0.8px #111"></div>
<div class="abs" style="left:948.4px;top:57px;width:10px;height:571px;background:#eceae5"></div>
<div class="btn" style="left:948.6px;top:57.4px;width:9.4px;height:8.8px"></div><svg class="abs" style="left:951px;top:60.4px" width="5" height="3" viewBox="0 0 5 3"><path d="M0.2 2.8H4.8L2.5 0.2Z" fill="#111"/></svg>
<div class="btn" style="left:948.6px;top:511px;width:9.4px;height:9.4px"></div>
<div class="btn" style="left:948.6px;top:521px;width:9.4px;height:9px"></div><svg class="abs" style="left:951px;top:524.4px" width="5" height="3" viewBox="0 0 5 3"><path d="M0.2 0.2H4.8L2.5 2.8Z" fill="#111"/></svg>
<div class="abs" style="left:948.6px;top:531.6px;width:9.2px;height:96px;background:linear-gradient(90deg,#222 0%,#484848 22%,#585858 50%,#444 78%,#222 100%);box-shadow:inset 0 0 0 0.8px #111"></div>
<div class="abs" style="left:948.4px;top:628.4px;width:10px;height:12.4px;background:#e0ddd6"></div>
<svg class="abs" style="left:939.6px;top:647.4px" width="17" height="7" viewBox="0 0 17 7"><path d="M2 0.8H4.4V4H2ZM1 4H5.4M3.2 4V6.4" fill="none" stroke="#fff" stroke-width="1"/><path d="M11 0.8L15.6 6M15.6 0.8L11 6" stroke="#fff" stroke-width="1.2"/></svg>
<div class="abs" style="left:159.4px;top:657.6px;width:14.2px;height:13.4px;box-shadow:inset 0.7px 0.7px 0 #fff,inset -0.7px -0.7px 0 #8c8880"></div>
<svg class="abs" style="left:162.8px;top:659.6px" width="8" height="10" viewBox="0 0 8 10"><path d="M1.4 0.8V8L3.2 6.4L4.6 9.2L5.6 8.6L4.4 6H6.6Z" fill="#e4e2dc" stroke="#a8a49c" stroke-width="0.8"/></svg>
<div class="abs" style="left:664.6px;top:658px;width:294px;height:13.4px;box-shadow:inset 0.7px 0.7px 0 #fff,inset -0.7px -0.7px 0 #8c8880"></div>
<svg class="abs" style="left:667.1px;top:660.2px" width="9.6" height="9.6" viewBox="0 0 10 10"><path d="M2 2L8 8" stroke="#9a9a9a" stroke-width="0.9"/><circle cx="2" cy="2" r="0.9" fill="#777"/></svg>
<svg class="abs" style="left:680.8px;top:660.2px" width="9.6" height="9.6" viewBox="0 0 10 10"><path d="M2 2L8 8" stroke="#9a9a9a" stroke-width="0.9"/><circle cx="6.4" cy="6.4" r="0.9" fill="#777"/></svg>
<svg class="abs" style="left:694.2px;top:660.2px" width="9.6" height="9.6" viewBox="0 0 10 10"><circle cx="5" cy="5" r="3" fill="none" stroke="#9a9a9a" stroke-width="0.9"/><circle cx="6" cy="5.4" r="0.8" fill="#777"/></svg>
<svg class="abs" style="left:707.7px;top:660.2px" width="9.6" height="9.6" viewBox="0 0 10 10"><path d="M2 2L8 8M8 2L2 8" stroke="#9a9a9a" stroke-width="0.9"/></svg>
<svg class="abs" style="left:725.5px;top:660.2px" width="9.6" height="9.6" viewBox="0 0 10 10"><path d="M1.6 8L5 3L8.4 8" fill="none" stroke="#9a9a9a" stroke-width="0.9"/><circle cx="5" cy="3" r="0.8" fill="#777"/></svg>
<svg class="abs" style="left:738.0px;top:660.2px" width="9.6" height="9.6" viewBox="0 0 10 10"><path d="M1.6 8Q3 4 8 2.4" fill="none" stroke="#9a9a9a" stroke-width="0.9"/><circle cx="6" cy="3.2" r="0.9" fill="#777"/></svg>
<svg class="abs" style="left:752.1px;top:660.2px" width="9.6" height="9.6" viewBox="0 0 10 10"><path d="M1.4 2H8.6L5 8.4Z" fill="none" stroke="#9a9a9a" stroke-width="0.8"/><circle cx="6.4" cy="6" r="0.8" fill="#777"/></svg>
<svg class="abs" style="left:766.2px;top:660.2px" width="9.6" height="9.6" viewBox="0 0 10 10"><path d="M1.6 7Q4 6.6 8.4 3.4" fill="none" stroke="#9a9a9a" stroke-width="0.9"/><circle cx="8" cy="3.6" r="0.8" fill="#777"/></svg>
<svg class="abs" style="left:784.0px;top:660.2px" width="9.6" height="9.6" viewBox="0 0 10 10"><rect x="4.8" y="1" width="4.4" height="4" fill="#c8d0f8" stroke="#2030c8" stroke-width="0.9"/><path d="M1 1L6.6 7.4" stroke="#2030c8" stroke-width="1.2"/><path d="M4.8 8.8L7.6 8.4L6.8 5.6Z" fill="#2030c8"/><path d="M7 7L9.2 9.4" stroke="#e08020" stroke-width="1"/></svg>
<svg class="abs" style="left:799.6px;top:660.2px" width="9.6" height="9.6" viewBox="0 0 10 10"><path d="M1.8 0.6V3.2" stroke="#d01828" stroke-width="0.8"/><circle cx="1.8" cy="1.2" r="0.9" fill="#d01828"/><g fill="#111"><rect x="2.6" y="3.2" width="1.1" height="1.1"/><rect x="2.6" y="5.2" width="1.1" height="1.1"/><rect x="2.6" y="7.2" width="1.1" height="1.1"/><rect x="2.6" y="9" width="1.1" height="1.1"/><rect x="4.8" y="3.2" width="1.1" height="1.1"/><rect x="4.8" y="5.2" width="1.1" height="1.1"/><rect x="4.8" y="7.2" width="1.1" height="1.1"/><rect x="4.8" y="9" width="1.1" height="1.1"/><rect x="7" y="3.2" width="1.1" height="1.1"/><rect x="7" y="5.2" width="1.1" height="1.1"/><rect x="7" y="7.2" width="1.1" height="1.1"/><rect x="7" y="9" width="1.1" height="1.1"/><rect x="9.0" y="3.2" width="1.1" height="1.1"/><rect x="9.0" y="5.2" width="1.1" height="1.1"/><rect x="9.0" y="7.2" width="1.1" height="1.1"/><rect x="9.0" y="9" width="1.1" height="1.1"/></g></svg>
<svg class="abs" style="left:812.4px;top:660.2px" width="9.6" height="9.6" viewBox="0 0 10 10"><path d="M1.8 0.6V3.2" stroke="#d01828" stroke-width="0.8"/><circle cx="1.8" cy="1.2" r="0.9" fill="#d01828"/><path d="M1 3.6H9M5 3.6V8.6M2.4 8.6H8.6" stroke="#111" stroke-width="0.9"/><path d="M5 8.6L8.4 5" stroke="#2030c8" stroke-width="0.9"/></svg>
<svg class="abs" style="left:825.5px;top:660.2px" width="9.6" height="9.6" viewBox="0 0 10 10"><path d="M1.8 0.6V3.2" stroke="#d01828" stroke-width="0.8"/><circle cx="1.8" cy="1.2" r="0.9" fill="#d01828"/><path d="M1 9L9 1.4M2 2.6L9 9" stroke="#111" stroke-width="0.9"/><rect x="4.2" y="4.4" width="2.2" height="2.2" fill="#20d040"/></svg>
<div class="abs" style="left:838.0px;top:658.8px;width:12.8px;height:12.4px;background:#f4f3ef;box-shadow:inset 0.7px 0.7px 0 #808080,inset -0.7px -0.7px 0 #fff"></div><svg class="abs" style="left:839.6px;top:660.2px" width="9.6" height="9.6" viewBox="0 0 10 10"><path d="M1.8 0.6V3.2" stroke="#d01828" stroke-width="0.8"/><circle cx="1.8" cy="1.2" r="0.9" fill="#d01828"/><path d="M2.6 3L9 9.2" stroke="#111" stroke-width="1"/><circle cx="3.4" cy="3.8" r="1.1" fill="#d01828"/></svg>
<div class="abs" style="left:851.1px;top:658.8px;width:12.8px;height:12.4px;background:#f4f3ef;box-shadow:inset 0.7px 0.7px 0 #808080,inset -0.7px -0.7px 0 #fff"></div><svg class="abs" style="left:852.7px;top:660.2px" width="9.6" height="9.6" viewBox="0 0 10 10"><path d="M1.8 0.6V3.2" stroke="#d01828" stroke-width="0.8"/><circle cx="1.8" cy="1.2" r="0.9" fill="#d01828"/><path d="M2.6 3L9 9.2" stroke="#111" stroke-width="1"/><circle cx="6" cy="6.2" r="1.1" fill="#d01828"/></svg>
<svg class="abs" style="left:866.8px;top:660.2px" width="9.6" height="9.6" viewBox="0 0 10 10"><path d="M1.8 0.6V3.2" stroke="#d01828" stroke-width="0.8"/><circle cx="1.8" cy="1.2" r="0.9" fill="#d01828"/><path d="M2.4 3H8.8L5.6 9Z M3 8.8L8.4 3.2" fill="none" stroke="#111" stroke-width="0.8"/><rect x="4.8" y="5" width="2.2" height="2.2" fill="#d01828"/></svg>
<div class="abs" style="left:878.0px;top:658.8px;width:12.8px;height:12.4px;background:#f4f3ef;box-shadow:inset 0.7px 0.7px 0 #808080,inset -0.7px -0.7px 0 #fff"></div><svg class="abs" style="left:879.6px;top:660.2px" width="9.6" height="9.6" viewBox="0 0 10 10"><path d="M1.8 0.6V3.2" stroke="#d01828" stroke-width="0.8"/><circle cx="1.8" cy="1.2" r="0.9" fill="#d01828"/><path d="M2.4 3.6H8L5.4 9Z" fill="none" stroke="#111" stroke-width="0.8"/><circle cx="8.2" cy="3.6" r="1" fill="#d01828"/><circle cx="5.2" cy="8.4" r="1" fill="#2030c8"/></svg>
<svg class="abs" style="left:892.7px;top:660.2px" width="9.6" height="9.6" viewBox="0 0 10 10"><path d="M1.8 0.6V3.2" stroke="#d01828" stroke-width="0.8"/><circle cx="1.8" cy="1.2" r="0.9" fill="#d01828"/><path d="M2.4 8.6Q4 3.6 9 2.6V8.6" fill="none" stroke="#111" stroke-width="0.9"/><circle cx="8.6" cy="8.2" r="1" fill="#d01828"/></svg>
<svg class="abs" style="left:905.8px;top:660.2px" width="9.6" height="9.6" viewBox="0 0 10 10"><path d="M1.8 0.6V3.2" stroke="#d01828" stroke-width="0.8"/><circle cx="1.8" cy="1.2" r="0.9" fill="#d01828"/><path d="M2.6 3.4H8.4V8.8H3.6Z" fill="none" stroke="#111" stroke-width="0.9"/><circle cx="8.4" cy="8.4" r="1" fill="#d01828"/></svg>
<svg class="abs" style="left:919.2px;top:660.2px" width="9.6" height="9.6" viewBox="0 0 10 10"><path d="M1.8 0.6V3.2" stroke="#d01828" stroke-width="0.8"/><circle cx="1.8" cy="1.2" r="0.9" fill="#d01828"/><path d="M2.4 8.6Q6 7.6 8.8 1.6" fill="none" stroke="#111" stroke-width="1"/><circle cx="5.4" cy="6.8" r="1" fill="#d01828"/></svg>
<div class="abs" style="left:931.1px;top:658.8px;width:12.8px;height:12.4px;background:#f4f3ef;box-shadow:inset 0.7px 0.7px 0 #808080,inset -0.7px -0.7px 0 #fff"></div><svg class="abs" style="left:932.7px;top:660.2px" width="9.6" height="9.6" viewBox="0 0 10 10"><path d="M1.8 0.6V3.2" stroke="#d01828" stroke-width="0.8"/><circle cx="1.8" cy="1.2" r="0.9" fill="#d01828"/><path d="M3 3.6H9" stroke="#111" stroke-width="0.9"/><path d="M2 7H9.2V9.2H2Z" fill="#d8d428" stroke="#555" stroke-width="0.6"/><path d="M2 5.4H9" stroke="#e08020" stroke-width="0.8"/></svg>
<svg class="abs" style="left:947.4px;top:660.2px" width="9.6" height="9.6" viewBox="0 0 10 10"><path d="M1.8 0.6V3.2" stroke="#d01828" stroke-width="0.8"/><circle cx="1.8" cy="1.2" r="0.9" fill="#d01828"/><path d="M3.6 2.6H9V9.2H3.6Z" fill="#f0e890" stroke="#777" stroke-width="0.8"/><path d="M5 2.6V9.2" stroke="#aaa" stroke-width="0.6"/></svg>
<div class="sep" style="left:721px;top:659.4px;height:11px"></div>
<div class="sep" style="left:780.4px;top:659.4px;height:11px"></div>
<div class="sep" style="left:796.4px;top:659.4px;height:11px"></div>
<div class="abs" style="left:4.6px;top:677.4px;width:16.6px;height:12.4px;background:#d4d0c8;border-radius:0 0 2px 2px;box-shadow:inset -0.8px -0.8px 0 #404040,inset 0.8px 0 0 #fff"></div>
<svg class="abs" style="left:7.6px;top:679.6px" width="10" height="8" viewBox="0 0 10 8"><rect x="0.6" y="0.6" width="2.6" height="2.6" fill="#fff" stroke="#222" stroke-width="0.7"/><path d="M2 3.2V5.6H4.4" fill="none" stroke="#222" stroke-width="0.7"/><rect x="4.4" y="1.6" width="4" height="2.4" fill="#e02020"/><rect x="4.4" y="4.4" width="4" height="2.6" fill="#20b0b0"/></svg>
<div class="abs" style="left:1px;top:691px;width:77px;height:10.4px;box-shadow:inset 0.7px 0.7px 0 #a6a29a,inset -0.7px -0.7px 0 #f2f0ea"></div>
<div class="abs" style="left:79.6px;top:691px;width:77.6px;height:10.4px;box-shadow:inset 0.7px 0.7px 0 #a6a29a,inset -0.7px -0.7px 0 #f2f0ea"></div>
<div class="abs" style="left:159px;top:691px;width:21.6px;height:10.4px;box-shadow:inset 0.7px 0.7px 0 #a6a29a,inset -0.7px -0.7px 0 #f2f0ea"><span class="t" style="left:6.0px;top:1.8px;font-size:7.2px;color:#222;transform:scaleX(0.792);transform-origin:0 0">mm</span></div>
<div class="abs" style="left:182px;top:691px;width:42px;height:10.4px;box-shadow:inset 0.7px 0.7px 0 #a6a29a,inset -0.7px -0.7px 0 #f2f0ea"><span class="t" style="left:6.8px;top:1.8px;font-size:7.2px;color:#222;transform:scaleX(0.901);transform-origin:0 0">Ebene XY</span></div>
<span class="t" style="left:229.0px;top:692.8px;font-size:7.2px;color:#222;transform:scaleX(0.872);transform-origin:0 0">Bereit</span>
<div class="abs" style="left:0;top:702.8px;width:960px;height:0.8px;background:#f4f2ee"></div>
<div class="abs task" style="left:2px;top:705.2px;width:30.4px;height:13px;box-shadow:inset 0.8px 0.8px 0 #fff,inset -0.8px -0.8px 0 #404040,inset -1.5px -1.5px 0 #808080"><svg class="abs" style="left:2.4px;top:2.2px" width="9" height="9" viewBox="0 0 10 10"><path d="M0.8 1.8Q2.8 0.6 4.6 1.8V4.8Q2.8 3.6 0.8 4.8Z" fill="#e03020"/><path d="M5.2 1.8Q7 3 9 1.8V4.8Q7 6 5.2 4.8Z" fill="#30a030"/><path d="M0.8 5.4Q2.8 4.2 4.6 5.4V8.4Q2.8 7.2 0.8 8.4Z" fill="#2848d0"/><path d="M5.2 5.4Q7 6.6 9 5.4V8.4Q7 9.6 5.2 8.4Z" fill="#e8c020"/></svg><span class="t" style="left:11.8px;top:3.1px;font-size:7.2px;font-weight:bold;color:#111;transform:scaleX(1.012);transform-origin:0 0">Start</span></div>
<div class="abs task" style="left:37.5px;top:705.2px;width:94.5px;height:13px;box-shadow:inset 0.8px 0.8px 0 #fff,inset -0.8px -0.8px 0 #404040,inset -1.5px -1.5px 0 #808080"><svg class="abs" style="left:3.4px;top:2px" width="9.6" height="9.6" viewBox="0 0 10 10"><rect x="0.6" y="0.6" width="8.8" height="8.8" fill="#1e3c8c" stroke="#0a1a5a" stroke-width="0.6"/><path d="M3 7.6V2.6H5Q6.6 2.6 6.6 4Q6.6 5.4 5 5.4H3" fill="none" stroke="#b8d4ff" stroke-width="1.1"/></svg><span class="t" style="left:13.3px;top:3.1px;font-size:7.2px;color:#111;transform:scaleX(0.891);transform-origin:0 0">Adobe Photoshop CS3 E...</span></div>
<div class="abs task" style="left:135px;top:705.2px;width:96px;height:13px;box-shadow:inset 0.8px 0.8px 0 #fff,inset -0.8px -0.8px 0 #404040,inset -1.5px -1.5px 0 #808080"><svg class="abs" style="left:3.4px;top:2px" width="9.6" height="9.6" viewBox="0 0 10 10"><path d="M2 3H8L7.4 9.4H2.6Z" fill="#e8c050" stroke="#6a4a10" stroke-width="0.7"/><path d="M3.4 3L2.4 0.6M5 3V0.4M6.6 3L7.8 0.8" stroke="#c03030" stroke-width="1"/><path d="M5 3V0.4" stroke="#3050c0" stroke-width="1"/></svg><span class="t" style="left:14.2px;top:3.1px;font-size:7.2px;color:#111;transform:scaleX(0.892);transform-origin:0 0">FF-Pier Screenshot3 - Paint</span></div>
<div class="abs task" style="left:234px;top:705.2px;width:95.6px;height:13px;box-shadow:inset 0.8px 0.8px 0 #fff,inset -0.8px -0.8px 0 #404040,inset -1.5px -1.5px 0 #808080"><svg class="abs" style="left:3.4px;top:2px" width="9.6" height="9.6" viewBox="0 0 10 10"><ellipse cx="5" cy="5" rx="4.4" ry="3" transform="rotate(-40 5 5)" fill="#e8a030" stroke="#7a4a08" stroke-width="0.8"/><path d="M3 7L7 3M2.4 5.4L5.6 2.4M4.6 7.8L7.8 4.6" stroke="#7a4a08" stroke-width="0.6"/></svg><span class="t" style="left:14.0px;top:3.1px;font-size:7.2px;color:#111;transform:scaleX(0.905);transform-origin:0 0">9. Eminem - Paul (Skit) - ...</span></div>
<div class="abs task" style="left:333px;top:705.2px;width:95px;height:13px;background:#f0efec;box-shadow:inset 0.8px 0.8px 0 #404040,inset -0.8px -0.8px 0 #fff,inset 1.5px 1.5px 0 #808080"><svg class="abs" style="left:3.4px;top:2px" width="9.6" height="9.6" viewBox="0 0 10 10"><path d="M0.6 1.2H9.4L5 9.4Z" fill="#e83030"/><path d="M0.6 1.2L3.6 1.2L5 9.4Z" fill="#f0c020"/><path d="M3.6 1.2H6.4L5 9.4Z" fill="#30a848"/><path d="M6.4 1.2H9.4L5 5Z" fill="#3060d0"/></svg><span class="t" style="left:14.5px;top:3.1px;font-size:7.2px;font-weight:bold;color:#111;transform:scaleX(1.001);transform-origin:0 0">Scia Engineer - [Wett...</span></div>
<div class="abs task" style="left:432px;top:705.2px;width:95.6px;height:13px;box-shadow:inset 0.8px 0.8px 0 #fff,inset -0.8px -0.8px 0 #404040,inset -1.5px -1.5px 0 #808080"><svg class="abs" style="left:3.4px;top:2px" width="9.6" height="9.6" viewBox="0 0 10 10"><rect x="0.8" y="0.8" width="8.4" height="8.4" fill="#e8b8b8" stroke="#8a1020" stroke-width="0.9"/><path d="M2 7.6L5 2.4L8 7.6M2.4 4H7.6" stroke="#c02030" stroke-width="0.9" fill="none"/></svg><span class="t" style="left:14.2px;top:3.1px;font-size:7.2px;color:#111;transform:scaleX(0.821);transform-origin:0 0">WinTV32</span></div>
<div class="abs task" style="left:531px;top:705.2px;width:96px;height:13px;box-shadow:inset 0.8px 0.8px 0 #fff,inset -0.8px -0.8px 0 #404040,inset -1.5px -1.5px 0 #808080"><svg class="abs" style="left:3.4px;top:2px" width="9.6" height="9.6" viewBox="0 0 10 10"><path d="M0.8 8.6V2.2H4L4.8 3.2H9.2V8.6Z" fill="#f4e060" stroke="#8a7a10" stroke-width="0.8"/></svg><span class="t" style="left:14.5px;top:3.1px;font-size:7.2px;color:#111;transform:scaleX(0.914);transform-origin:0 0">J:\Seagate Sync\SyncRe...</span></div>
<div class="abs" style="left:949.6px;top:707.4px;width:10.4px;height:9.6px;background:#1a2a7a"><span class="t" style="left:1px;top:1.8px;font-size:6.4px;color:#fff">DE</span></div>
</body>
</html>
